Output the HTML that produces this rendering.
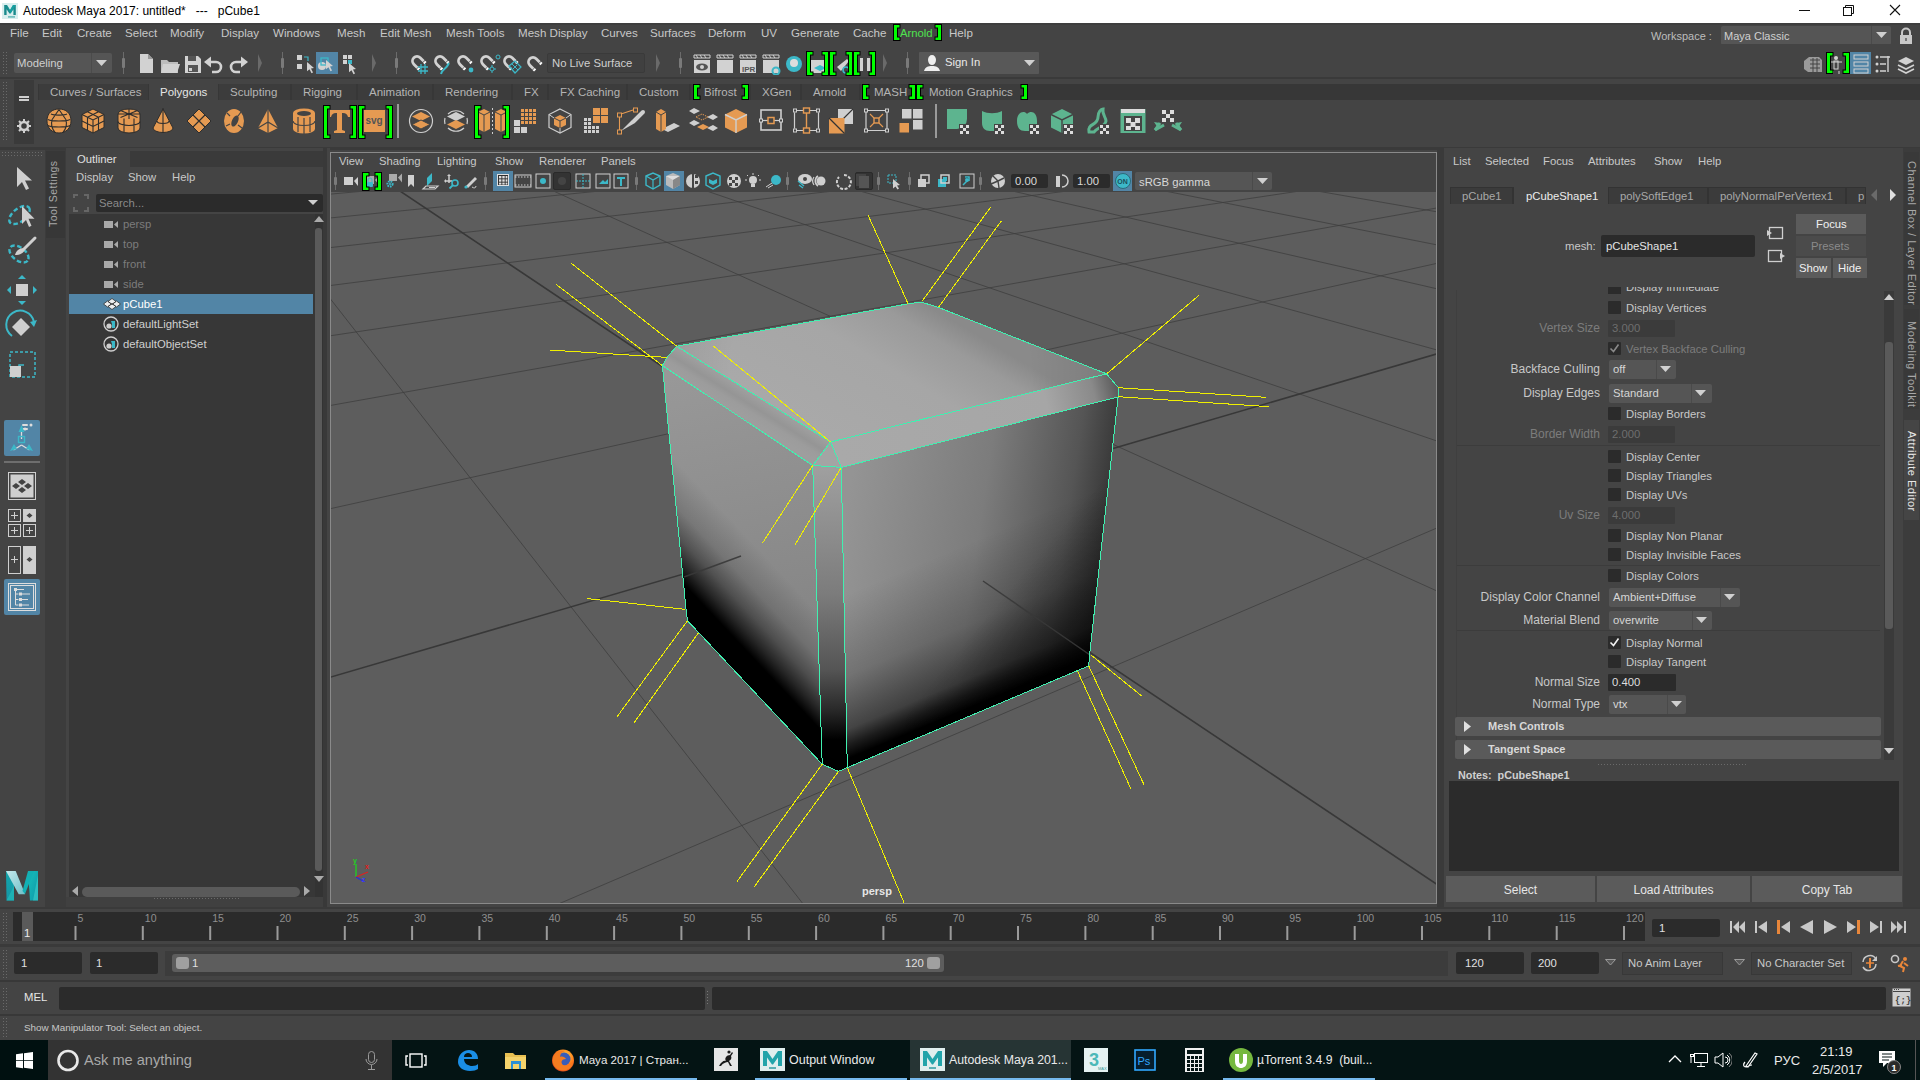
<!DOCTYPE html><html><head><meta charset="utf-8"><style>
*{margin:0;padding:0;box-sizing:border-box}
html,body{width:1920px;height:1080px;overflow:hidden;background:#444;font-family:"Liberation Sans",sans-serif;font-size:12px;color:#c4c4c4}
.a{position:absolute;display:block}
.t{position:absolute;white-space:nowrap;line-height:1}
</style></head><body>
<div class="a" style="left:0px;top:0px;width:1920px;height:23px;background:#ffffff;"></div>
<svg class="a" style="left:2px;top:3px" width="16" height="16" viewBox="0 0 16 16">
<rect x="0" y="0" width="16" height="16" fill="#d8eeee"/>
<path d="M2.2 12V2h2.8l3 5 3-5h2.8v10h-2.4V6.2L8.6 10.5H7.4L4.6 6.2V12z" fill="#1a8a8c"/>
<path d="M5 2L8 7l3-5h2.8L8.6 10.5z" fill="#14a8aa" opacity=".7"/>
<rect x="6" y="13.2" width="7" height="1.4" fill="#5ab4b4"/></svg>
<div class="t" style="left:23px;top:5px;font-size:12.01px;color:#000;">Autodesk Maya 2017: untitled*&nbsp;&nbsp;&nbsp;---&nbsp;&nbsp;&nbsp;pCube1</div>
<div class="a" style="left:1799px;top:10px;width:11px;height:1px;background:#111;"></div>
<svg class="a" style="left:1843px;top:5px" width="12" height="11" viewBox="0 0 12 11"><path d="M2.5 2.5V0.5h8v8h-2" fill="none" stroke="#111"/><rect x="0.5" y="2.5" width="8" height="8" fill="none" stroke="#111"/></svg>
<svg class="a" style="left:1889px;top:4px" width="12" height="12" viewBox="0 0 12 12"><path d="M1 1L11 11M11 1L1 11" stroke="#111" stroke-width="1.1"/></svg>
<div class="a" style="left:0px;top:23px;width:1920px;height:21px;background:#444;"></div>
<div class="a" style="left:0px;top:23px;width:1920px;height:2px;background:#3e3e3e;"></div>
<div class="t" style="left:10px;top:27px;font-size:11.6px;color:#c8c8c8;">File</div>
<div class="t" style="left:42px;top:27px;font-size:11.6px;color:#c8c8c8;">Edit</div>
<div class="t" style="left:77px;top:27px;font-size:11.6px;color:#c8c8c8;">Create</div>
<div class="t" style="left:125px;top:27px;font-size:11.6px;color:#c8c8c8;">Select</div>
<div class="t" style="left:170px;top:27px;font-size:11.6px;color:#c8c8c8;">Modify</div>
<div class="t" style="left:221px;top:27px;font-size:11.6px;color:#c8c8c8;">Display</div>
<div class="t" style="left:273px;top:27px;font-size:11.6px;color:#c8c8c8;">Windows</div>
<div class="t" style="left:337px;top:27px;font-size:11.6px;color:#c8c8c8;">Mesh</div>
<div class="t" style="left:380px;top:27px;font-size:11.6px;color:#c8c8c8;">Edit Mesh</div>
<div class="t" style="left:446px;top:27px;font-size:11.6px;color:#c8c8c8;">Mesh Tools</div>
<div class="t" style="left:518px;top:27px;font-size:11.6px;color:#c8c8c8;">Mesh Display</div>
<div class="t" style="left:601px;top:27px;font-size:11.6px;color:#c8c8c8;">Curves</div>
<div class="t" style="left:650px;top:27px;font-size:11.6px;color:#c8c8c8;">Surfaces</div>
<div class="t" style="left:708px;top:27px;font-size:11.6px;color:#c8c8c8;">Deform</div>
<div class="t" style="left:761px;top:27px;font-size:11.6px;color:#c8c8c8;">UV</div>
<div class="t" style="left:791px;top:27px;font-size:11.6px;color:#c8c8c8;">Generate</div>
<div class="t" style="left:853px;top:27px;font-size:11.6px;color:#c8c8c8;">Cache</div>
<div class="t" style="left:949px;top:27px;font-size:11.6px;color:#c8c8c8;">Help</div>
<svg class="a" style="left:893px;top:24px" width="8" height="17" viewBox="0 0 8 17"><path d="M7.5 0H0v17h7.5v-4.5H5V4.5h2.5z" fill="#000"/><path d="M6.5 1H1v15h5.5v-2.5H4V3.5h2.5z" fill="#00ff00"/></svg>
<div class="t" style="left:900px;top:28px;font-size:11.3px;color:#4fe34f;">Arnold</div>
<svg class="a" style="left:934px;top:24px" width="8" height="17" viewBox="0 0 8 17"><path d="M0.5 0H8v17H0.5v-4.5H3V4.5H0.5z" fill="#000"/><path d="M1.5 1H7v15H1.5v-2.5H4V3.5H1.5z" fill="#00ff00"/></svg>
<div class="t" style="left:1651px;top:31px;font-size:11px;color:#bdbdbd;">Workspace :</div>
<div class="a" style="left:1721px;top:26px;width:170px;height:19px;background:#555;border-radius:2px"></div>
<div class="a" style="left:1871px;top:26px;width:1px;height:19px;background:#4a4a4a;"></div>
<div class="t" style="left:1724px;top:31px;font-size:11px;color:#d0d0d0;">Maya Classic</div>
<svg class="a" style="left:1876px;top:32px" width="11" height="7"><path d="M0 0h11L5.5 6z" fill="#cfcfcf"/></svg>
<svg class="a" style="left:1899px;top:27px" width="14" height="18"><path d="M3 8V5.5a4 4 0 0 1 8 0V8" fill="none" stroke="#c8c8c8" stroke-width="2"/><rect x="1" y="8" width="12" height="9" fill="#c8c8c8"/><rect x="6.3" y="11" width="1.4" height="3" fill="#555"/></svg>
<div class="a" style="left:0px;top:44px;width:1920px;height:34px;background:#444;"></div>
<div class="a" style="left:0px;top:77px;width:1920px;height:2px;background:#3a3a3a;"></div>
<svg class="a" style="left:3px;top:52px" width="6" height="24"><rect x="0" y="0" width="1" height="1" fill="#6a6a6a"/><rect x="3" y="0" width="1" height="1" fill="#6a6a6a"/><rect x="0" y="3" width="1" height="1" fill="#6a6a6a"/><rect x="3" y="3" width="1" height="1" fill="#6a6a6a"/><rect x="0" y="6" width="1" height="1" fill="#6a6a6a"/><rect x="3" y="6" width="1" height="1" fill="#6a6a6a"/><rect x="0" y="9" width="1" height="1" fill="#6a6a6a"/><rect x="3" y="9" width="1" height="1" fill="#6a6a6a"/><rect x="0" y="12" width="1" height="1" fill="#6a6a6a"/><rect x="3" y="12" width="1" height="1" fill="#6a6a6a"/><rect x="0" y="15" width="1" height="1" fill="#6a6a6a"/><rect x="3" y="15" width="1" height="1" fill="#6a6a6a"/><rect x="0" y="18" width="1" height="1" fill="#6a6a6a"/><rect x="3" y="18" width="1" height="1" fill="#6a6a6a"/><rect x="0" y="21" width="1" height="1" fill="#6a6a6a"/><rect x="3" y="21" width="1" height="1" fill="#6a6a6a"/></svg>
<div class="a" style="left:14px;top:53px;width:98px;height:20px;background:#555;border-radius:2px"></div>
<div class="a" style="left:91px;top:53px;width:1px;height:20px;background:#4b4b4b;"></div>
<div class="t" style="left:17px;top:58px;font-size:11.3px;color:#cfcfcf;">Modeling</div>
<svg class="a" style="left:96px;top:60px" width="11" height="7"><path d="M0 0h11L5.5 6z" fill="#d0d0d0"/></svg>
<svg class="a" style="left:121px;top:52px" width="5" height="22"><rect x="2" y="0" width="1" height="22" fill="#6b6b6b"/><rect x="1" y="6" width="3" height="10" rx="1" fill="#7a7a7a"/></svg>
<svg class="a" style="left:138px;top:53px" width="120" height="22" viewBox="0 0 120 22">
<path d="M2 1h8l5 5v14H2z" fill="#d2d2d2"/><path d="M10 1v5h5" fill="#999"/>
<path d="M23 7h6l2 2h9v11H23z" fill="#bdbdbd"/><path d="M25 11h17l-3 9H23z" fill="#d2d2d2"/>
<path d="M47 3h13l3 3v14H47z" fill="#d2d2d2"/><rect x="50" y="3" width="8" height="5" fill="#555"/><rect x="50" y="12" width="10" height="7" fill="#555"/><rect x="51" y="15" width="3" height="3" fill="#d2d2d2"/>
<path d="M72 9h6a5 5 0 0 1 0 10h-4" fill="none" stroke="#d2d2d2" stroke-width="2.6"/><path d="M66 9l7-5.5v11z" fill="#d2d2d2"/>
<path d="M104 9h-6a5 5 0 0 0 0 10h4" fill="none" stroke="#d2d2d2" stroke-width="2.6"/><path d="M110 9l-7-5.5v11z" fill="#d2d2d2"/>
</svg>
<svg class="a" style="left:258px;top:54px" width="5" height="18"><path d="M0 0L4 9L0 18z" fill="#6a6a6a"/></svg>
<svg class="a" style="left:280px;top:52px" width="5" height="22"><rect x="2" y="0" width="1" height="22" fill="#6b6b6b"/><rect x="1" y="6" width="3" height="10" rx="1" fill="#7a7a7a"/></svg>
<div class="a" style="left:316px;top:52px;width:22px;height:22px;background:#5285a6;"></div>
<svg class="a" style="left:295px;top:53px" width="70" height="22" viewBox="0 0 70 22">
<rect x="2" y="2" width="5" height="5" fill="#d2d2d2"/><rect x="2" y="11" width="5" height="5" fill="#d2d2d2"/><path d="M9 4h4v4" fill="none" stroke="#3cb8c8" stroke-width="1.2"/>
<path d="M12 9l7 6-3 .5 2 4-1.5.8-2-4-2.5 2z" fill="#d2d2d2"/>
<circle cx="27" cy="13" r="4" fill="#d2d2d2"/><rect x="26" y="5" width="7" height="7" fill="none" stroke="#3cb8c8" stroke-width="1.3"/>
<path d="M31 7l7 6-3 .5 2 4-1.5.8-2-4-2.5 2z" fill="#d2d2d2"/>
<rect x="48" y="2" width="4" height="4" fill="#d2d2d2"/><rect x="53" y="2" width="4" height="4" fill="#d2d2d2"/><rect x="48" y="7" width="4" height="4" fill="#d2d2d2"/><rect x="53" y="7" width="4" height="4" fill="#3cb8c8"/>
<path d="M54 10l7 6-3 .5 2 4-1.5.8-2-4-2.5 2z" fill="#d2d2d2"/>
</svg>
<svg class="a" style="left:372px;top:54px" width="5" height="18"><path d="M0 0L4 9L0 18z" fill="#6a6a6a"/></svg>
<svg class="a" style="left:394px;top:52px" width="5" height="22"><rect x="2" y="0" width="1" height="22" fill="#6b6b6b"/><rect x="1" y="6" width="3" height="10" rx="1" fill="#7a7a7a"/></svg>
<svg class="a" style="left:408px;top:53px" width="140" height="22" viewBox="0 0 140 22">
<g transform="translate(9 8) rotate(-45)"><path d="M-4.5 5V0a4.5 4.5 0 0 1 9 0v5" fill="none" stroke="#d2d2d2" stroke-width="2.8"/><rect x="-6" y="5.5" width="3" height="2" fill="#fff"/><rect x="3" y="5.5" width="3" height="2" fill="#fff"/></g><path d="M10 14h10M10 18h10M13 11v10M17 11v10" stroke="#3cb8c8" stroke-width="1.3"/>
<g transform="translate(32 8) rotate(-45)"><path d="M-4.5 5V0a4.5 4.5 0 0 1 9 0v5" fill="none" stroke="#d2d2d2" stroke-width="2.8"/><rect x="-6" y="5.5" width="3" height="2" fill="#fff"/><rect x="3" y="5.5" width="3" height="2" fill="#fff"/></g><path d="M33 21c1-5 5-4 8-11" fill="none" stroke="#3cb8c8" stroke-width="2"/>
<g transform="translate(55 8) rotate(-45)"><path d="M-4.5 5V0a4.5 4.5 0 0 1 9 0v5" fill="none" stroke="#d2d2d2" stroke-width="2.8"/><rect x="-6" y="5.5" width="3" height="2" fill="#fff"/><rect x="3" y="5.5" width="3" height="2" fill="#fff"/></g><circle cx="63" cy="17" r="2.4" fill="#3cb8c8"/>
<g transform="translate(78 8) rotate(-45)"><path d="M-4.5 5V0a4.5 4.5 0 0 1 9 0v5" fill="none" stroke="#d2d2d2" stroke-width="2.8"/><rect x="-6" y="5.5" width="3" height="2" fill="#fff"/><rect x="3" y="5.5" width="3" height="2" fill="#fff"/></g><circle cx="84" cy="16" r="2" fill="none" stroke="#3cb8c8"/><circle cx="90" cy="4" r="2" fill="none" stroke="#3cb8c8"/><path d="M80 16h2M86 16h2M84 12v2M84 18v2" stroke="#3cb8c8"/>
<g transform="translate(101 8) rotate(-45)"><path d="M-4.5 5V0a4.5 4.5 0 0 1 9 0v5" fill="none" stroke="#d2d2d2" stroke-width="2.8"/><rect x="-6" y="5.5" width="3" height="2" fill="#fff"/><rect x="3" y="5.5" width="3" height="2" fill="#fff"/></g><path d="M101 13l6-5 6 6-6 6z" fill="none" stroke="#3cb8c8" stroke-width="1.2"/><path d="M104 11l6 6M105 16l4-4" stroke="#3cb8c8"/>
<g transform="translate(125 9) rotate(-45)"><path d="M-4.5 5V0a4.5 4.5 0 0 1 9 0v5" fill="none" stroke="#d2d2d2" stroke-width="2.8"/><rect x="-6" y="5.5" width="3" height="2" fill="#fff"/><rect x="3" y="5.5" width="3" height="2" fill="#fff"/></g>
</svg>
<div class="a" style="left:547px;top:53px;width:98px;height:20px;background:#404040;border:1px solid #3a3a3a;border-radius:2px"></div>
<div class="t" style="left:552px;top:58px;font-size:11.3px;color:#cfcfcf;">No Live Surface</div>
<svg class="a" style="left:656px;top:54px" width="5" height="18"><path d="M0 0L4 9L0 18z" fill="#6a6a6a"/></svg>
<svg class="a" style="left:678px;top:52px" width="5" height="22"><rect x="2" y="0" width="1" height="22" fill="#6b6b6b"/><rect x="1" y="6" width="3" height="10" rx="1" fill="#7a7a7a"/></svg>
<svg class="a" style="left:692px;top:53px" width="190" height="22" viewBox="0 0 190 22">
<rect x="2" y="7" width="16" height="13" fill="#d2d2d2"/><path d="M2 2h16v3H2z" fill="none" stroke="#d2d2d2" stroke-width="1"/><path d="M4 2l2 3M8 2l2 3M12 2l2 3" stroke="#d2d2d2"/><ellipse cx="10" cy="14" rx="6" ry="3.5" fill="#555"/><circle cx="10" cy="14" r="2" fill="#d2d2d2"/>
<rect x="25" y="7" width="16" height="13" fill="#d2d2d2"/><path d="M25 2h16v3H25z" fill="none" stroke="#d2d2d2" stroke-width="1"/><path d="M27 2l2 3M31 2l2 3M35 2l2 3" stroke="#d2d2d2"/>
<rect x="48" y="7" width="16" height="13" fill="#d2d2d2"/><path d="M48 2h16v3H48z" fill="none" stroke="#d2d2d2" stroke-width="1"/><path d="M50 2l2 3M54 2l2 3M58 2l2 3" stroke="#d2d2d2"/><text x="50" y="19" font-size="8" font-family="Liberation Sans" fill="#555" font-weight="bold">IPR</text>
<rect x="71" y="7" width="16" height="13" fill="#d2d2d2"/><path d="M71 2h16v3H71z" fill="none" stroke="#d2d2d2" stroke-width="1"/><path d="M73 2l2 3M77 2l2 3M81 2l2 3" stroke="#d2d2d2"/><circle cx="84" cy="18" r="3.5" fill="none" stroke="#3cb8c8" stroke-width="2"/>
<circle cx="102" cy="11" r="8" fill="#3cb8c8"/><circle cx="102" cy="10" r="4" fill="#ddd"/>
<rect x="118" y="7" width="16" height="13" fill="#d2d2d2"/><path d="M122 15l6-3 6 3-6 3z" fill="#3cb8c8"/>
<path d="M145 14l10-8 2 2-8 10z" fill="#d2d2d2"/><circle cx="154" cy="17" r="3" fill="none" stroke="#3cb8c8" stroke-width="1.6"/>
<rect x="168" y="5" width="3" height="13" fill="#d2d2d2"/><rect x="175" y="5" width="3" height="13" fill="#d2d2d2"/>
</svg>
<svg class="a" style="left:806px;top:51px" width="8" height="25" viewBox="0 0 8 25"><path d="M7.5 0H0v25h7.5v-4.5H5V4.5h2.5z" fill="#000"/><path d="M6.5 1H1v23h5.5v-2.5H4V3.5h2.5z" fill="#00ff00"/></svg>
<svg class="a" style="left:821px;top:51px" width="8" height="25" viewBox="0 0 8 25"><path d="M0.5 0H8v25H0.5v-4.5H3V4.5H0.5z" fill="#000"/><path d="M1.5 1H7v23H1.5v-2.5H4V3.5H1.5z" fill="#00ff00"/></svg>
<svg class="a" style="left:829px;top:51px" width="8" height="25" viewBox="0 0 8 25"><path d="M7.5 0H0v25h7.5v-4.5H5V4.5h2.5z" fill="#000"/><path d="M6.5 1H1v23h5.5v-2.5H4V3.5h2.5z" fill="#00ff00"/></svg>
<svg class="a" style="left:845px;top:51px" width="8" height="25" viewBox="0 0 8 25"><path d="M0.5 0H8v25H0.5v-4.5H3V4.5H0.5z" fill="#000"/><path d="M1.5 1H7v23H1.5v-2.5H4V3.5H1.5z" fill="#00ff00"/></svg>
<svg class="a" style="left:853px;top:51px" width="8" height="25" viewBox="0 0 8 25"><path d="M7.5 0H0v25h7.5v-4.5H5V4.5h2.5z" fill="#000"/><path d="M6.5 1H1v23h5.5v-2.5H4V3.5h2.5z" fill="#00ff00"/></svg>
<svg class="a" style="left:868px;top:51px" width="8" height="25" viewBox="0 0 8 25"><path d="M0.5 0H8v25H0.5v-4.5H3V4.5H0.5z" fill="#000"/><path d="M1.5 1H7v23H1.5v-2.5H4V3.5H1.5z" fill="#00ff00"/></svg>
<svg class="a" style="left:883px;top:54px" width="5" height="18"><path d="M0 0L4 9L0 18z" fill="#6a6a6a"/></svg>
<svg class="a" style="left:905px;top:52px" width="5" height="22"><rect x="2" y="0" width="1" height="22" fill="#6b6b6b"/><rect x="1" y="6" width="3" height="10" rx="1" fill="#7a7a7a"/></svg>
<div class="a" style="left:919px;top:52px;width:120px;height:22px;background:#585858;border-radius:1px"></div>
<svg class="a" style="left:924px;top:54px" width="16" height="18"><path d="M4 6a4 5 0 1 1 8 0c0 3-2 5-4 5S4 9 4 6z" fill="#eee"/><path d="M0 17c1-4 4-5 8-5s7 1 8 5z" fill="#eee"/></svg>
<div class="t" style="left:945px;top:57px;font-size:11.3px;color:#e8e8e8;">Sign In</div>
<svg class="a" style="left:1024px;top:60px" width="11" height="7"><path d="M0 0h11L5.5 6z" fill="#d0d0d0"/></svg>
<div class="a" style="left:1849px;top:52px;width:22px;height:22px;background:#5285a6;"></div>
<svg class="a" style="left:1802px;top:53px" width="118" height="22" viewBox="0 0 118 22">
<path d="M2 8l5-4h10l3 3v12H6l-4-3z" fill="#9a9a9a"/><path d="M8 7h10M8 11h10M8 15h10M11 5v14M15 5v14" stroke="#444" stroke-width="1"/>
<circle cx="34" cy="5" r="2" fill="#d2d2d2"/><rect x="32" y="8" width="4" height="8" fill="none" stroke="#d2d2d2"/><path d="M28 9h12M31 18v3M37 18v3" stroke="#d2d2d2"/>
<rect x="52" y="2" width="14" height="4" fill="none" stroke="#d2d2d2"/><rect x="52" y="9" width="14" height="4" fill="none" stroke="#d2d2d2"/><rect x="52" y="16" width="14" height="4" fill="none" stroke="#d2d2d2"/>
<circle cx="75" cy="4" r="1.5" fill="#d2d2d2"/><circle cx="75" cy="11" r="1.5" fill="#d2d2d2"/><circle cx="75" cy="18" r="1.5" fill="#d2d2d2"/><path d="M78 4h10M78 11h6M78 18h6M86 3v16" stroke="#d2d2d2" stroke-width="1.4"/>
<path d="M96 8l8-4 8 4-8 4z" fill="#d2d2d2"/><path d="M96 12l8 4 8-4M96 16l8 4 8-4" fill="none" stroke="#d2d2d2" stroke-width="1.6"/>
</svg>
<svg class="a" style="left:1826px;top:52px" width="8" height="22" viewBox="0 0 8 22"><path d="M7.5 0H0v22h7.5v-4.5H5V4.5h2.5z" fill="#000"/><path d="M6.5 1H1v20h5.5v-2.5H4V3.5h2.5z" fill="#00ff00"/></svg>
<svg class="a" style="left:1842px;top:52px" width="8" height="22" viewBox="0 0 8 22"><path d="M0.5 0H8v22H0.5v-4.5H3V4.5H0.5z" fill="#000"/><path d="M1.5 1H7v20H1.5v-2.5H4V3.5H1.5z" fill="#00ff00"/></svg>
<div class="a" style="left:0px;top:79px;width:1920px;height:67px;background:#444;"></div>
<svg class="a" style="left:3px;top:82px" width="6" height="60"><rect x="0" y="0" width="1" height="1" fill="#6a6a6a"/><rect x="3" y="0" width="1" height="1" fill="#6a6a6a"/><rect x="0" y="3" width="1" height="1" fill="#6a6a6a"/><rect x="3" y="3" width="1" height="1" fill="#6a6a6a"/><rect x="0" y="6" width="1" height="1" fill="#6a6a6a"/><rect x="3" y="6" width="1" height="1" fill="#6a6a6a"/><rect x="0" y="9" width="1" height="1" fill="#6a6a6a"/><rect x="3" y="9" width="1" height="1" fill="#6a6a6a"/><rect x="0" y="12" width="1" height="1" fill="#6a6a6a"/><rect x="3" y="12" width="1" height="1" fill="#6a6a6a"/><rect x="0" y="15" width="1" height="1" fill="#6a6a6a"/><rect x="3" y="15" width="1" height="1" fill="#6a6a6a"/><rect x="0" y="18" width="1" height="1" fill="#6a6a6a"/><rect x="3" y="18" width="1" height="1" fill="#6a6a6a"/><rect x="0" y="21" width="1" height="1" fill="#6a6a6a"/><rect x="3" y="21" width="1" height="1" fill="#6a6a6a"/><rect x="0" y="24" width="1" height="1" fill="#6a6a6a"/><rect x="3" y="24" width="1" height="1" fill="#6a6a6a"/><rect x="0" y="27" width="1" height="1" fill="#6a6a6a"/><rect x="3" y="27" width="1" height="1" fill="#6a6a6a"/><rect x="0" y="30" width="1" height="1" fill="#6a6a6a"/><rect x="3" y="30" width="1" height="1" fill="#6a6a6a"/><rect x="0" y="33" width="1" height="1" fill="#6a6a6a"/><rect x="3" y="33" width="1" height="1" fill="#6a6a6a"/><rect x="0" y="36" width="1" height="1" fill="#6a6a6a"/><rect x="3" y="36" width="1" height="1" fill="#6a6a6a"/><rect x="0" y="39" width="1" height="1" fill="#6a6a6a"/><rect x="3" y="39" width="1" height="1" fill="#6a6a6a"/><rect x="0" y="42" width="1" height="1" fill="#6a6a6a"/><rect x="3" y="42" width="1" height="1" fill="#6a6a6a"/><rect x="0" y="45" width="1" height="1" fill="#6a6a6a"/><rect x="3" y="45" width="1" height="1" fill="#6a6a6a"/><rect x="0" y="48" width="1" height="1" fill="#6a6a6a"/><rect x="3" y="48" width="1" height="1" fill="#6a6a6a"/><rect x="0" y="51" width="1" height="1" fill="#6a6a6a"/><rect x="3" y="51" width="1" height="1" fill="#6a6a6a"/><rect x="0" y="54" width="1" height="1" fill="#6a6a6a"/><rect x="3" y="54" width="1" height="1" fill="#6a6a6a"/><rect x="0" y="57" width="1" height="1" fill="#6a6a6a"/><rect x="3" y="57" width="1" height="1" fill="#6a6a6a"/></svg>
<div class="a" style="left:14px;top:80px;width:20px;height:64px;background:#3a3a3a;"></div>
<div class="a" style="left:19px;top:96px;width:10px;height:2px;background:#cfcfcf;"></div>
<div class="a" style="left:19px;top:99px;width:10px;height:2px;background:#cfcfcf;"></div>
<svg class="a" style="left:17px;top:119px" width="14" height="14"><circle cx="7" cy="7" r="4" fill="none" stroke="#cfcfcf" stroke-width="2.5"/><g stroke="#cfcfcf" stroke-width="2"><path d="M7 0v3M7 11v3M0 7h3M11 7h3M2 2l2 2M10 10l2 2M12 2l-2 2M2 12l2-2"/></g></svg>
<div class="a" style="left:38px;top:84px;width:1882px;height:16px;background:#373737;"></div>
<div class="a" style="left:39px;top:84px;width:109px;height:16px;background:#3c3c3c;"></div>
<div class="t" style="left:50px;top:87px;font-size:11.5px;color:#b4b4b4;">Curves / Surfaces</div>
<div class="a" style="left:149px;top:84px;width:69px;height:16px;background:#444;"></div>
<div class="t" style="left:160px;top:87px;font-size:11.5px;color:#e6e6e6;">Polygons</div>
<div class="a" style="left:219px;top:84px;width:71px;height:16px;background:#3c3c3c;"></div>
<div class="t" style="left:230px;top:87px;font-size:11.5px;color:#b4b4b4;">Sculpting</div>
<div class="a" style="left:292px;top:84px;width:64px;height:16px;background:#3c3c3c;"></div>
<div class="t" style="left:303px;top:87px;font-size:11.5px;color:#b4b4b4;">Rigging</div>
<div class="a" style="left:358px;top:84px;width:74px;height:16px;background:#3c3c3c;"></div>
<div class="t" style="left:369px;top:87px;font-size:11.5px;color:#b4b4b4;">Animation</div>
<div class="a" style="left:434px;top:84px;width:77px;height:16px;background:#3c3c3c;"></div>
<div class="t" style="left:445px;top:87px;font-size:11.5px;color:#b4b4b4;">Rendering</div>
<div class="a" style="left:513px;top:84px;width:34px;height:16px;background:#3c3c3c;"></div>
<div class="t" style="left:524px;top:87px;font-size:11.5px;color:#b4b4b4;">FX</div>
<div class="a" style="left:549px;top:84px;width:77px;height:16px;background:#3c3c3c;"></div>
<div class="t" style="left:560px;top:87px;font-size:11.5px;color:#b4b4b4;">FX Caching</div>
<div class="a" style="left:628px;top:84px;width:61px;height:16px;background:#3c3c3c;"></div>
<div class="t" style="left:639px;top:87px;font-size:11.5px;color:#b4b4b4;">Custom</div>
<div class="a" style="left:691px;top:84px;width:58px;height:16px;background:#3c3c3c;"></div>
<div class="t" style="left:704px;top:87px;font-size:11.5px;color:#b4b4b4;">Bifrost</div>
<div class="a" style="left:751px;top:84px;width:49px;height:16px;background:#3c3c3c;"></div>
<div class="t" style="left:762px;top:87px;font-size:11.5px;color:#b4b4b4;">XGen</div>
<div class="a" style="left:802px;top:84px;width:57px;height:16px;background:#3c3c3c;"></div>
<div class="t" style="left:813px;top:87px;font-size:11.5px;color:#b4b4b4;">Arnold</div>
<div class="a" style="left:861px;top:84px;width:53px;height:16px;background:#3c3c3c;"></div>
<div class="t" style="left:874px;top:87px;font-size:11.5px;color:#b4b4b4;">MASH</div>
<div class="a" style="left:916px;top:84px;width:109px;height:16px;background:#3c3c3c;"></div>
<div class="t" style="left:929px;top:87px;font-size:11.5px;color:#b4b4b4;">Motion Graphics</div>
<svg class="a" style="left:693px;top:84px" width="8" height="16" viewBox="0 0 8 16"><path d="M7.5 0H0v16h7.5v-4.5H5V4.5h2.5z" fill="#000"/><path d="M6.5 1H1v14h5.5v-2.5H4V3.5h2.5z" fill="#00ff00"/></svg>
<svg class="a" style="left:741px;top:84px" width="8" height="16" viewBox="0 0 8 16"><path d="M0.5 0H8v16H0.5v-4.5H3V4.5H0.5z" fill="#000"/><path d="M1.5 1H7v14H1.5v-2.5H4V3.5H1.5z" fill="#00ff00"/></svg>
<svg class="a" style="left:862px;top:84px" width="8" height="16" viewBox="0 0 8 16"><path d="M7.5 0H0v16h7.5v-4.5H5V4.5h2.5z" fill="#000"/><path d="M6.5 1H1v14h5.5v-2.5H4V3.5h2.5z" fill="#00ff00"/></svg>
<svg class="a" style="left:908px;top:84px" width="8" height="16" viewBox="0 0 8 16"><path d="M0.5 0H8v16H0.5v-4.5H3V4.5H0.5z" fill="#000"/><path d="M1.5 1H7v14H1.5v-2.5H4V3.5H1.5z" fill="#00ff00"/></svg>
<svg class="a" style="left:916px;top:84px" width="8" height="16" viewBox="0 0 8 16"><path d="M7.5 0H0v16h7.5v-4.5H5V4.5h2.5z" fill="#000"/><path d="M6.5 1H1v14h5.5v-2.5H4V3.5h2.5z" fill="#00ff00"/></svg>
<svg class="a" style="left:1020px;top:84px" width="8" height="16" viewBox="0 0 8 16"><path d="M0.5 0H8v16H0.5v-4.5H3V4.5H0.5z" fill="#000"/><path d="M1.5 1H7v14H1.5v-2.5H4V3.5H1.5z" fill="#00ff00"/></svg>
<svg class="a" style="left:40px;top:104px" width="1160" height="34" viewBox="40 104 1160 34">
<g transform="translate(47,108)">
<path d="M12 1C19 1 24 5 24 13c0 7-5 12-12 12S0 20 0 13C0 5 5 1 12 1z" fill="#e59a52" stroke="#2d2d2d" stroke-width="1"/>
<path d="M4 6c3 1.5 13 1.5 16 0M1 11.5c4 2 18 2 22 0M1 17.5c4 2 18 2 22 0M12 1.5L5 11.8M12 1.5l7 10.3M5 11.8c-1 4 0 9 3 12.5M19 11.8c1 4 0 9-3 12.5" fill="none" stroke="#2d2d2d" stroke-width="1.1"/>
</g>
<g transform="translate(81,108)">
<path d="M12 1l11 5.5v13L12 25 1 19.5v-13z" fill="#e59a52" stroke="#2d2d2d" stroke-width="1"/>
<path d="M1 6.5l11 5.5 11-5.5M12 12v13M6.5 3.8l11 5.5M17.5 3.8L6.5 9.3M1 13l11 5.5 11-5.5M6.5 9.3v13M17.5 9.3v13" fill="none" stroke="#2d2d2d" stroke-width="1.1"/>
</g>
<g transform="translate(118,108)">
<path d="M0 6a11 5 0 0 1 22 0v14a11 5 0 0 1-22 0z" fill="#e59a52" stroke="#2d2d2d" stroke-width="1"/>
<path d="M0 6h22M2.5 2.5l17 7M19.5 2.5l-17 7M11 1v10M0 13.5a11 4 0 0 0 22 0M6 10.5v14M16 10.5v14" fill="none" stroke="#2d2d2d" stroke-width="1.1"/>
</g>
<g transform="translate(153,108)">
<path d="M10 1L20 20a10 4.5 0 0 1-20 0z" fill="#e59a52" stroke="#2d2d2d" stroke-width="1"/>
<path d="M10 0v25M4 13a6 2.5 0 0 0 12 0" fill="none" stroke="#2d2d2d" stroke-width="1.1"/>
</g>
<g transform="translate(187,108)">
<path d="M12 1l12 12-12 12L0 13z" fill="#e59a52" stroke="#2d2d2d" stroke-width="1"/>
<path d="M6 7l12 12M18 7L6 19" stroke="#2d2d2d" stroke-width="1.2"/>
</g>
<g transform="translate(224,108)">
<ellipse cx="10" cy="13" rx="10" ry="12" fill="#e59a52"/>
<ellipse cx="11" cy="13" rx="3" ry="6" transform="rotate(25 11 13)" fill="#444"/>
<path d="M3 5l3 3M17 4l-3 4M2 18l4-2M18 20l-4-3" stroke="#444" stroke-width="1.2"/>
</g>
<g transform="translate(258,108)">
<path d="M10 1l10 19-10 5-10-5z" fill="#e59a52"/>
<path d="M10 1v24M0 20l10-6 10 6" fill="none" stroke="#444" stroke-width="1.2"/>
</g>
<g transform="translate(293,108)">
<path d="M0 5a11 4.5 0 0 1 22 0v16a11 4.5 0 0 1-22 0z" fill="#e59a52"/>
<ellipse cx="11" cy="5.5" rx="7" ry="2.6" fill="#444"/>
<path d="M0 13a11 4.5 0 0 0 22 0M5 9v15M11 10v16M17 9v15" fill="none" stroke="#444" stroke-width="1.2"/>
</g>
<g transform="translate(329,108)">
<path d="M1 2h20v7h-2c-1-3-2-4-5-4h-1v17l3 1v2H5v-2l3-1V5H7C4 5 3 6 2 9H1z" fill="#e59a52"/>
</g>
<g transform="translate(364,110)">
<rect x="0" y="0" width="21" height="22" fill="#e59a52"/>
<text x="1.5" y="14" font-size="10" font-weight="bold" font-family="Liberation Sans" fill="#555">svg</text>
</g>
<rect x="397" y="104" width="2" height="35" fill="#9a9a9a"/>
<g transform="translate(409,108)">
<circle cx="12" cy="13" r="11.5" fill="none" stroke="#cfcfcf" stroke-width="1.2"/>
<path d="M12 4l9 4.5-9 4.5-9-4.5z" fill="#e59a52"/><path d="M12 12l9 4.5-9 4.5-9-4.5z" fill="#e59a52" stroke="#444" stroke-width="1"/>
</g>
<g transform="translate(444,108)">
<path d="M4 6a11.5 11.5 0 0 1 16 0M20 20a11.5 11.5 0 0 1-16 0M1 10a11.5 11.5 0 0 0 0 6M23 10a11.5 11.5 0 0 1 0 6" fill="none" stroke="#cfcfcf" stroke-width="1.2"/>
<path d="M12 4l9 4.5-9 4.5-9-4.5z" fill="#cfcfcf"/><path d="M12 12l9 4.5-9 4.5-9-4.5z" fill="#e59a52"/>
</g>
<g transform="translate(477,108)">
<path d="M1 4l6-3 6 3v17l-6 3-6-3z" fill="#e59a52"/><path d="M1 4l6 3 6-3M7 7v17" fill="none" stroke="#444"/>
<path d="M18 4l6-3 6 3v17l-6 3-6-3z" fill="#e59a52"/><path d="M18 4l6 3 6-3M24 7v17" fill="none" stroke="#444"/>
<path d="M15.5 0v26" stroke="#cfcfcf" stroke-dasharray="2 2"/>
</g>
<g transform="translate(513,108)">
<rect x="8" y="1" width="3" height="3" fill="#e59a52"/><rect x="12" y="1" width="3" height="3" fill="#e59a52"/><rect x="16" y="1" width="3" height="3" fill="#e59a52"/><rect x="20" y="1" width="3" height="3" fill="#e59a52"/><rect x="8" y="5" width="3" height="3" fill="#e59a52"/><rect x="12" y="5" width="3" height="3" fill="#e59a52"/><rect x="16" y="5" width="3" height="3" fill="#e59a52"/><rect x="20" y="5" width="3" height="3" fill="#e59a52"/><rect x="8" y="9" width="3" height="3" fill="#e59a52"/><rect x="12" y="9" width="3" height="3" fill="#e59a52"/><rect x="16" y="9" width="3" height="3" fill="#e59a52"/><rect x="20" y="9" width="3" height="3" fill="#e59a52"/><rect x="8" y="13" width="3" height="3" fill="#e59a52"/><rect x="12" y="13" width="3" height="3" fill="#e59a52"/><rect x="16" y="13" width="3" height="3" fill="#e59a52"/><rect x="20" y="13" width="3" height="3" fill="#e59a52"/>
<rect x="1" y="12" width="6" height="6" fill="#cfcfcf"/><rect x="8" y="19" width="6" height="6" fill="#cfcfcf"/><rect x="1" y="19" width="6" height="6" fill="#cfcfcf"/>
</g>
<g transform="translate(548,108)">
<path d="M12 1l11 5.5v13L12 25 1 19.5v-13z" fill="none" stroke="#cfcfcf" stroke-width="1.2"/>
<path d="M12 7l6 3v7l-6 3-6-3v-7z" fill="#e59a52"/><path d="M6 10l6 3 6-3M12 13v7" stroke="#444" fill="none"/>
<path d="M1 6.5l5 3.5M23 6.5l-5 3.5M12 25v-5" stroke="#cfcfcf"/>
</g>
<g transform="translate(583,108)">
<rect x="10" y="0" width="7" height="7" fill="#e59a52"/><rect x="18" y="0" width="7" height="7" fill="#e59a52"/><rect x="10" y="8" width="7" height="7" fill="#e59a52"/><rect x="18" y="8" width="7" height="7" fill="#e59a52"/>
<rect x="1" y="10" width="3" height="3" fill="#cfcfcf"/><rect x="5" y="10" width="3" height="3" fill="#cfcfcf"/><rect x="1" y="14" width="3" height="3" fill="#cfcfcf"/><rect x="5" y="14" width="3" height="3" fill="#cfcfcf"/><rect x="1" y="18" width="3" height="3" fill="#cfcfcf"/><rect x="5" y="18" width="3" height="3" fill="#cfcfcf"/><rect x="9" y="18" width="3" height="3" fill="#cfcfcf"/><rect x="13" y="18" width="3" height="3" fill="#cfcfcf"/><rect x="1" y="22" width="3" height="3" fill="#cfcfcf"/><rect x="5" y="22" width="3" height="3" fill="#cfcfcf"/><rect x="9" y="22" width="3" height="3" fill="#cfcfcf"/><rect x="13" y="22" width="3" height="3" fill="#cfcfcf"/>
</g>
<g transform="translate(617,108)">
<path d="M2.5 9v13M4 6l12-4" stroke="#e59a52" stroke-width="1.1" fill="none"/>
<rect x="0.5" y="5" width="4" height="4" fill="#444" stroke="#e59a52"/><rect x="16.5" y="0" width="4" height="4" fill="#444" stroke="#e59a52"/><rect x="0.5" y="22" width="4" height="4" fill="#444" stroke="#e59a52"/>
<path d="M4 23l11-11 3 3z" fill="#cfcfcf"/><path d="M17 13l9-9" stroke="#cfcfcf" stroke-width="4" stroke-linecap="round"/>
</g>
<g transform="translate(655,108)">
<path d="M10 25l12-6 6 3-12 6z" fill="#cfcfcf" transform="translate(-3,-4)"/>
<path d="M1 4l5-3 5 3v17l-5 3-5-3z" fill="#e59a52"/><path d="M1 4l5 3 5-3M6 7v17" stroke="#444" fill="none"/>
</g>
<g transform="translate(686,108)">
<path d="M3 3l5-3 6 3-6 3zM21 9l6-3 5 3-5 3zM3 15l5-3 6 3-6 3zM21 20l6-3 5 3-5 3z" fill="#cfcfcf"/>
<path d="M10 9l6-3 6 3-6 3z" fill="none" stroke="#e59a52" stroke-dasharray="1.5 1"/>
<path d="M11 19l6-3 6 3-6 3z" fill="#e59a52"/>
</g>
<g transform="translate(724,108)">
<path d="M12 1l11 5.5v13L12 25 1 19.5v-13z" fill="#e59a52"/>
<path d="M1 6.5l11 5.5 11-5.5M12 12v13" stroke="#cfcfcf" stroke-width="1.4" fill="none"/>
</g>
<g transform="translate(759,108)">
<rect x="2" y="2" width="20" height="20" fill="none" stroke="#cfcfcf" stroke-width="1.6"/>
<path d="M2 12.5h20" stroke="#cfcfcf" stroke-width="1.2"/>
<rect x="0.5" y="11" width="3" height="3" fill="#444" stroke="#cfcfcf"/><rect x="20.5" y="11" width="3" height="3" fill="#444" stroke="#cfcfcf"/>
<rect x="9" y="9.5" width="6" height="6" fill="#444" stroke="#e59a52" stroke-width="1.5"/>
</g>
<g transform="translate(793,108)">
<path d="M3.5 2.5h20M3.5 22.5h20M1.5 4.5v16M25.5 4.5v16" stroke="#cfcfcf" stroke-width="1.2" fill="none"/>
<rect x="0.5" y="1" width="3" height="3" fill="#444" stroke="#cfcfcf"/><rect x="23.5" y="1" width="3" height="3" fill="#444" stroke="#cfcfcf"/><rect x="0.5" y="21" width="3" height="3" fill="#444" stroke="#cfcfcf"/><rect x="23.5" y="21" width="3" height="3" fill="#444" stroke="#cfcfcf"/>
<path d="M13.5 5v15" stroke="#e59a52" stroke-width="1.4"/>
<rect x="10.5" y="0" width="6" height="5" fill="#444" stroke="#e59a52" stroke-width="1.4"/><rect x="10.5" y="20" width="6" height="5" fill="#444" stroke="#e59a52" stroke-width="1.4"/>
</g>
<g transform="translate(828,108)">
<rect x="10" y="1" width="15" height="15" fill="#cfcfcf"/><path d="M25 1L10 16" stroke="#333" stroke-width="1.1"/>
<rect x="1" y="10" width="15.5" height="15.5" fill="#e59a52"/><path d="M1 10l15.5 15.5" stroke="#333" stroke-width="1.2"/>
</g>
<g transform="translate(864,108)">
<path d="M3.5 2.5h18M3.5 22.5h18M2 4v17M23 4v17" stroke="#cfcfcf" stroke-width="1.2" fill="none"/>
<rect x="0.5" y="1" width="3" height="3" fill="#444" stroke="#cfcfcf"/><rect x="21.5" y="1" width="3" height="3" fill="#444" stroke="#cfcfcf"/><rect x="0.5" y="21" width="3" height="3" fill="#444" stroke="#cfcfcf"/><rect x="21.5" y="21" width="3" height="3" fill="#444" stroke="#cfcfcf"/>
<path d="M6 6l4 4M19 6l-4 4M6 19l4-4M19 19l-4-4" stroke="#e59a52" stroke-width="1.1"/>
<rect x="10" y="10" width="5" height="5" fill="#444" stroke="#e59a52" stroke-width="1.4"/>
</g>
<g transform="translate(898,108)">
<rect x="4" y="1" width="9.5" height="9.5" fill="#cfcfcf"/><rect x="15" y="1" width="9.5" height="9.5" fill="#cfcfcf"/><rect x="15" y="12" width="9.5" height="9.5" fill="#cfcfcf"/>
<rect x="1.5" y="15" width="9.5" height="9.5" fill="#e59a52"/>
</g>
<rect x="935" y="104" width="2" height="35" fill="#9a9a9a"/>
<g transform="translate(946,108)">
<path d="M1 1h20v10a10 10 0 0 1-10 10H1z" fill="#5db48f"/>
</g>
<g transform="translate(981,108)">
<path d="M1 3c6 3 14 3 20 0v20H9C4 23 1 20 1 15z" fill="#5db48f"/>
</g>
<g transform="translate(1016,108)">
<path d="M1 13C1 4 8 2 11 6c4-4 10-2 10 7v10H9C4 23 1 20 1 13z" fill="#5db48f"/>
</g>
<g transform="translate(1050,108)">
<path d="M12 1l11 5.5v13L12 25 1 19.5v-13z" fill="#5db48f"/><path d="M1 6.5l11 5.5 11-5.5M12 12v13" stroke="#444" stroke-width="1.4" fill="none"/>
</g>
<g transform="translate(1086,108)">
<path d="M3 24C1 15 12 18 12 9c0-5 3-8 5-8-1 6 3 8 3 12-1 6-8 6-12 11z" fill="none" stroke="#5db48f" stroke-width="3"/>
</g>
<g transform="translate(1120,108)">
<rect x="0.5" y="1" width="25" height="24" fill="#5db48f"/><rect x="1" y="1" width="24" height="4" fill="#ddd"/><rect x="4" y="8" width="18" height="15" fill="#444"/>
<rect x="6" y="10" width="5" height="5" fill="#ddd"/><rect x="15" y="10" width="5" height="5" fill="#ddd"/><rect x="10.5" y="14" width="5" height="5" fill="#ddd"/><rect x="6" y="18" width="5" height="4" fill="#ddd"/><rect x="15" y="18" width="5" height="4" fill="#ddd"/>
</g>
<g transform="translate(1154,108)">
<path d="M1 22l9-5M27 22l-9-5" stroke="#5db48f" stroke-width="3"/><path d="M0 14l6 1-2 5zM28 14l-6 1 2 5z" fill="#5db48f"/>
<path d="M1 22l5-7M27 22l-5-7" stroke="#5db48f" stroke-width="3"/>
</g>
</svg>
<svg class="a" style="left:1197px;top:104px" width="1" height="1"></svg>
<svg class="a" style="left:959px;top:124px" width="12" height="12"><rect width="12" height="12" fill="#444"/><rect x="1" y="1" width="3" height="3" fill="#ddd"/><rect x="7" y="1" width="3" height="3" fill="#ddd"/><rect x="4" y="4" width="3" height="3" fill="#ddd"/><rect x="1" y="7" width="3" height="3" fill="#ddd"/><rect x="7" y="7" width="3" height="3" fill="#ddd"/></svg>
<svg class="a" style="left:994px;top:124px" width="12" height="12"><rect width="12" height="12" fill="#444"/><rect x="1" y="1" width="3" height="3" fill="#ddd"/><rect x="7" y="1" width="3" height="3" fill="#ddd"/><rect x="4" y="4" width="3" height="3" fill="#ddd"/><rect x="1" y="7" width="3" height="3" fill="#ddd"/><rect x="7" y="7" width="3" height="3" fill="#ddd"/></svg>
<svg class="a" style="left:1029px;top:124px" width="12" height="12"><rect width="12" height="12" fill="#444"/><rect x="1" y="1" width="3" height="3" fill="#ddd"/><rect x="7" y="1" width="3" height="3" fill="#ddd"/><rect x="4" y="4" width="3" height="3" fill="#ddd"/><rect x="1" y="7" width="3" height="3" fill="#ddd"/><rect x="7" y="7" width="3" height="3" fill="#ddd"/></svg>
<svg class="a" style="left:1063px;top:124px" width="12" height="12"><rect width="12" height="12" fill="#444"/><rect x="1" y="1" width="3" height="3" fill="#ddd"/><rect x="7" y="1" width="3" height="3" fill="#ddd"/><rect x="4" y="4" width="3" height="3" fill="#ddd"/><rect x="1" y="7" width="3" height="3" fill="#ddd"/><rect x="7" y="7" width="3" height="3" fill="#ddd"/></svg>
<svg class="a" style="left:1099px;top:124px" width="12" height="12"><rect width="12" height="12" fill="#444"/><rect x="1" y="1" width="3" height="3" fill="#ddd"/><rect x="7" y="1" width="3" height="3" fill="#ddd"/><rect x="4" y="4" width="3" height="3" fill="#ddd"/><rect x="1" y="7" width="3" height="3" fill="#ddd"/><rect x="7" y="7" width="3" height="3" fill="#ddd"/></svg>
<svg class="a" style="left:1160px;top:108px" width="16" height="16"><rect x="2" y="2" width="4" height="4" fill="#ddd"/><rect x="10" y="2" width="4" height="4" fill="#ddd"/><rect x="6" y="6" width="4" height="4" fill="#ddd"/><rect x="2" y="10" width="4" height="4" fill="#ddd"/><rect x="10" y="10" width="4" height="4" fill="#ddd"/></svg>
<svg class="a" style="left:323px;top:105px" width="8" height="34" viewBox="0 0 8 34"><path d="M7.5 0H0v34h7.5v-4.5H5V4.5h2.5z" fill="#000"/><path d="M6.5 1H1v32h5.5v-2.5H4V3.5h2.5z" fill="#00ff00"/></svg>
<svg class="a" style="left:349px;top:105px" width="8" height="34" viewBox="0 0 8 34"><path d="M0.5 0H8v34H0.5v-4.5H3V4.5H0.5z" fill="#000"/><path d="M1.5 1H7v32H1.5v-2.5H4V3.5H1.5z" fill="#00ff00"/></svg>
<svg class="a" style="left:358px;top:105px" width="8" height="34" viewBox="0 0 8 34"><path d="M7.5 0H0v34h7.5v-4.5H5V4.5h2.5z" fill="#000"/><path d="M6.5 1H1v32h5.5v-2.5H4V3.5h2.5z" fill="#00ff00"/></svg>
<svg class="a" style="left:385px;top:105px" width="8" height="34" viewBox="0 0 8 34"><path d="M0.5 0H8v34H0.5v-4.5H3V4.5H0.5z" fill="#000"/><path d="M1.5 1H7v32H1.5v-2.5H4V3.5H1.5z" fill="#00ff00"/></svg>
<svg class="a" style="left:474px;top:105px" width="8" height="34" viewBox="0 0 8 34"><path d="M7.5 0H0v34h7.5v-4.5H5V4.5h2.5z" fill="#000"/><path d="M6.5 1H1v32h5.5v-2.5H4V3.5h2.5z" fill="#00ff00"/></svg>
<svg class="a" style="left:502px;top:105px" width="8" height="34" viewBox="0 0 8 34"><path d="M0.5 0H8v34H0.5v-4.5H3V4.5H0.5z" fill="#000"/><path d="M1.5 1H7v32H1.5v-2.5H4V3.5H1.5z" fill="#00ff00"/></svg>
<div class="a" style="left:0px;top:146px;width:1920px;height:762px;background:#444;"></div>
<div class="a" style="left:0px;top:147px;width:1920px;height:3px;background:#3a3a3a;"></div>
<svg class="a" style="left:2px;top:152px" width="40" height="4"><rect x="0" y="0" width="1" height="1" fill="#6a6a6a"/><rect x="0" y="3" width="1" height="1" fill="#6a6a6a"/><rect x="3" y="0" width="1" height="1" fill="#6a6a6a"/><rect x="3" y="3" width="1" height="1" fill="#6a6a6a"/><rect x="6" y="0" width="1" height="1" fill="#6a6a6a"/><rect x="6" y="3" width="1" height="1" fill="#6a6a6a"/><rect x="9" y="0" width="1" height="1" fill="#6a6a6a"/><rect x="9" y="3" width="1" height="1" fill="#6a6a6a"/><rect x="12" y="0" width="1" height="1" fill="#6a6a6a"/><rect x="12" y="3" width="1" height="1" fill="#6a6a6a"/><rect x="15" y="0" width="1" height="1" fill="#6a6a6a"/><rect x="15" y="3" width="1" height="1" fill="#6a6a6a"/><rect x="18" y="0" width="1" height="1" fill="#6a6a6a"/><rect x="18" y="3" width="1" height="1" fill="#6a6a6a"/><rect x="21" y="0" width="1" height="1" fill="#6a6a6a"/><rect x="21" y="3" width="1" height="1" fill="#6a6a6a"/><rect x="24" y="0" width="1" height="1" fill="#6a6a6a"/><rect x="24" y="3" width="1" height="1" fill="#6a6a6a"/><rect x="27" y="0" width="1" height="1" fill="#6a6a6a"/><rect x="27" y="3" width="1" height="1" fill="#6a6a6a"/><rect x="30" y="0" width="1" height="1" fill="#6a6a6a"/><rect x="30" y="3" width="1" height="1" fill="#6a6a6a"/><rect x="33" y="0" width="1" height="1" fill="#6a6a6a"/><rect x="33" y="3" width="1" height="1" fill="#6a6a6a"/><rect x="36" y="0" width="1" height="1" fill="#6a6a6a"/><rect x="36" y="3" width="1" height="1" fill="#6a6a6a"/><rect x="39" y="0" width="1" height="1" fill="#6a6a6a"/><rect x="39" y="3" width="1" height="1" fill="#6a6a6a"/></svg>
<svg class="a" style="left:0px;top:160px" width="44" height="220" viewBox="0 0 44 220">
<path d="M17 7v20l5-5 4 8 3-1.5-4-8h7z" fill="#cfcfcf"/>
<ellipse cx="19.5" cy="55" rx="12" ry="6.5" transform="rotate(-38 19.5 55)" fill="none" stroke="#3cb8c8" stroke-width="2.4" stroke-dasharray="4.5 2.5"/>
<path d="M22 46v18l4-4 3 7 2.5-1.2-3-7h6z" fill="#cfcfcf"/>
<ellipse cx="19" cy="94" rx="11" ry="6.5" transform="rotate(38 19 94)" fill="none" stroke="#3cb8c8" stroke-width="2.4" stroke-dasharray="4.5 2.5"/>
<path d="M35 78l-11 11" stroke="#cfcfcf" stroke-width="3" stroke-linecap="round"/><path d="M24 88c-5 0-8 3-9 7 5 0 9-2 10-6z" fill="#cfcfcf"/>
<rect x="16" y="124" width="12" height="12" fill="#cfcfcf"/>
<path d="M22 115l4 4h-8zM22 145l4-4h-8zM7 130l4-4v8zM37 130l-4-4v8z" fill="#3cb8c8"/>
<path d="M12 176a14 14 0 1 1 22-14" fill="none" stroke="#3cb8c8" stroke-width="2"/><path d="M37 160l-3 7-4-5z" fill="#3cb8c8"/>
<path d="M21 158l9 9-9 9-9-9z" fill="#cfcfcf"/>
<rect x="10" y="192" width="25" height="25" fill="none" stroke="#3cb8c8" stroke-width="1.5" stroke-dasharray="3 2"/>
<path d="M19 209v-4h5" fill="none" stroke="#3cb8c8" stroke-width="1.5"/>
<rect x="10" y="206" width="11" height="11" fill="#cfcfcf"/>
</svg>
<div class="a" style="left:4px;top:420px;width:36px;height:36px;background:#5285a6;border-radius:2px"></div>
<svg class="a" style="left:4px;top:420px" width="36" height="36" viewBox="0 0 36 36">
<rect x="18" y="4" width="6" height="2" rx="1" fill="#ddd"/><rect x="18" y="8" width="6" height="2" rx="1" fill="#ddd"/>
<circle cx="27" cy="5" r="1.5" fill="#ddd"/><circle cx="21" cy="9" r="1.5" fill="#ddd"/>
<path d="M17.5 12v7M17.5 25l-8 5M17.5 25l8 5" stroke="#ddd" stroke-width="1.3"/>
<path d="M17.5 5l3 7h-6z" fill="#3cb8c8"/><rect x="14.5" y="16.5" width="6" height="6" fill="none" stroke="#3cb8c8" stroke-width="1.4"/>
<path d="M6 31l4-7 3 5z M29 31l-4-7-3 5z" fill="#3cb8c8"/>
</svg>
<div class="a" style="left:4px;top:461px;width:36px;height:2px;background:#6e6e6e;"></div>
<svg class="a" style="left:4px;top:470px" width="36" height="110" viewBox="0 0 36 110">
<rect x="4.5" y="2.5" width="27" height="27" fill="none" stroke="#cfcfcf"/><rect x="6.5" y="4.5" width="23" height="23" fill="#cfcfcf"/>
<path d="M18 9l4 3-4 3-4-3zM18 17l4 3-4 3-4-3zM12 13l4 3-4 3-4-3zM24 13l4 3-4 3-4-3z" fill="#444"/>
<rect x="4.5" y="39.5" width="12" height="12" fill="none" stroke="#cfcfcf"/><path d="M10.5 42v7M7 45.5h7" stroke="#cfcfcf"/>
<rect x="19" y="39" width="13" height="13" fill="#cfcfcf"/><path d="M25.5 43l3 2.5-3 2.5-3-2.5z" fill="#444"/>
<rect x="4.5" y="54.5" width="12" height="12" fill="none" stroke="#cfcfcf"/><path d="M10.5 57v7M7 60.5h7" stroke="#cfcfcf"/>
<rect x="19.5" y="54.5" width="12" height="12" fill="none" stroke="#cfcfcf"/><path d="M25.5 57v7M22 60.5h7" stroke="#cfcfcf"/>
<rect x="4.5" y="76.5" width="12" height="27" fill="none" stroke="#cfcfcf"/><path d="M10.5 86v7M7 89.5h7" stroke="#cfcfcf"/>
<rect x="19" y="76" width="13" height="28" fill="#cfcfcf"/><path d="M25.5 87l3 2.5-3 2.5-3-2.5z" fill="#444"/>
</svg>
<div class="a" style="left:4px;top:579px;width:36px;height:36px;background:#5285a6;border-radius:2px"></div>
<svg class="a" style="left:4px;top:579px" width="36" height="36" viewBox="0 0 36 36">
<rect x="4.5" y="4.5" width="27" height="27" fill="none" stroke="#ddd"/><rect x="6.5" y="6.5" width="23" height="23" fill="none" stroke="#ddd"/>
<rect x="10" y="9" width="3" height="3" fill="#ddd"/><path d="M13 10.5h7M11.5 12v14M11.5 15h3M11.5 20.5h3M11.5 26h3" stroke="#ddd"/>
<rect x="15" y="13.5" width="3" height="3" fill="#ddd"/><rect x="15" y="19" width="3" height="3" fill="#ddd"/><rect x="15" y="24.5" width="3" height="3" fill="#ddd"/>
<path d="M18 15h8M18 20.5h6M18 26h7" stroke="#ddd"/>
</svg>
<svg class="a" style="left:0px;top:860px" width="44" height="46" viewBox="0 0 44 46">
<defs><linearGradient id="mgl" x1="0" y1="0" x2="0" y2="1"><stop offset="0" stop-color="#12a6ac"/><stop offset="1" stop-color="#1596a6"/></linearGradient>
<linearGradient id="mgd" x1="0" y1="0" x2="1" y2="1"><stop offset="0" stop-color="#c4e8ec"/><stop offset="1" stop-color="#6ec0c8"/></linearGradient>
<linearGradient id="mgr" x1="0" y1="0" x2="1" y2="1"><stop offset="0" stop-color="#18c0bc"/><stop offset="1" stop-color="#0e98a8"/></linearGradient></defs>
<path d="M6 11h8v29.5H6.5z" fill="url(#mgl)"/>
<path d="M6.5 40.5L14 26v14.5z" fill="#1fb8b8" opacity=".8"/>
<path d="M6 11h9.7l9.5 23.3h-6.5z" fill="url(#mgd)"/>
<path d="M28 11h10v29.5h-8z" fill="url(#mgr)"/>
<path d="M28 11h6L25 34l-2.5-3z" fill="#12b0b4"/>
<path d="M38 15v25.5h-5z" fill="#3fd0cc" opacity=".6"/>
</svg>
<div class="a" style="left:45px;top:150px;width:21px;height:757px;background:#3c3c3c;"></div>
<div class="a" style="left:46px;top:151px;width:19px;height:87px;background:#373737;"></div>
<div class="t" style="left:48px;top:227px;font-size:10.5px;color:#a8a8a8;transform:rotate(-90deg);transform-origin:0 0;letter-spacing:0.5px">Tool Settings</div>
<div class="a" style="left:66px;top:148px;width:264px;height:759px;background:#444;"></div>
<div class="a" style="left:68px;top:151px;width:62px;height:16px;background:#444;"></div>
<div class="a" style="left:130px;top:151px;width:193px;height:16px;background:#3a3a3a;"></div>
<div class="t" style="left:77px;top:154px;font-size:11.3px;color:#e0e0e0;">Outliner</div>
<div class="t" style="left:76px;top:172px;font-size:11.3px;color:#c8c8c8;">Display</div>
<div class="t" style="left:128px;top:172px;font-size:11.3px;color:#c8c8c8;">Show</div>
<div class="t" style="left:172px;top:172px;font-size:11.3px;color:#c8c8c8;">Help</div>
<svg class="a" style="left:73px;top:194px" width="16" height="18"><path d="M1 4V1h4M11 1h4v4M15 13v4h-4M5 17H1v-4" fill="none" stroke="#666" stroke-width="2"/></svg>
<div class="a" style="left:96px;top:194px;width:227px;height:18px;background:#2b2b2b;border-radius:2px"></div>
<div class="t" style="left:99px;top:198px;font-size:11.3px;color:#8a8a8a;">Search...</div>
<svg class="a" style="left:308px;top:200px" width="10" height="6"><path d="M0 0h10L5 5z" fill="#cfcfcf"/></svg>
<div class="a" style="left:69px;top:214px;width:254px;height:683px;background:#373737;"></div>
<div class="a" style="left:66px;top:897px;width:260px;height:10px;background:#404040;"></div>
<div class="a" style="left:323px;top:148px;width:4px;height:759px;background:#393939;"></div>
<svg class="a" style="left:104px;top:220px" width="15" height="9"><rect x="0" y="1" width="9" height="7" fill="#a8a8a8"/><path d="M10 4.5L14 1v7z" fill="#a8a8a8"/></svg>
<div class="t" style="left:123px;top:219px;font-size:11.3px;color:#7c7c7c;">persp</div>
<svg class="a" style="left:104px;top:240px" width="15" height="9"><rect x="0" y="1" width="9" height="7" fill="#a8a8a8"/><path d="M10 4.5L14 1v7z" fill="#a8a8a8"/></svg>
<div class="t" style="left:123px;top:239px;font-size:11.3px;color:#7c7c7c;">top</div>
<svg class="a" style="left:104px;top:260px" width="15" height="9"><rect x="0" y="1" width="9" height="7" fill="#a8a8a8"/><path d="M10 4.5L14 1v7z" fill="#a8a8a8"/></svg>
<div class="t" style="left:123px;top:259px;font-size:11.3px;color:#7c7c7c;">front</div>
<svg class="a" style="left:104px;top:280px" width="15" height="9"><rect x="0" y="1" width="9" height="7" fill="#a8a8a8"/><path d="M10 4.5L14 1v7z" fill="#a8a8a8"/></svg>
<div class="t" style="left:123px;top:279px;font-size:11.3px;color:#7c7c7c;">side</div>
<div class="a" style="left:69px;top:294px;width:244px;height:20px;background:#5285a6;"></div>
<svg class="a" style="left:103px;top:298px" width="18" height="12"><path d="M9 0.5l4 3-4 3-4-3zM4.5 3l4 3-4 3-4-3zM13.5 3l4 3-4 3-4-3zM9 5.5l4 3-4 3-4-3z" fill="#eee" stroke="#333" stroke-width="0.8"/></svg>
<div class="t" style="left:123px;top:299px;font-size:11.3px;color:#ffffff;">pCube1</div>
<svg class="a" style="left:103px;top:316px" width="16" height="16"><circle cx="8" cy="8" r="7" fill="none" stroke="#cfcfcf" stroke-width="1.3"/><circle cx="6" cy="10" r="2.6" fill="#cfcfcf"/><path d="M8 5h4v7H9V8z" fill="#3cb8c8"/></svg>
<div class="t" style="left:123px;top:319px;font-size:11.3px;color:#d0d0d0;">defaultLightSet</div>
<svg class="a" style="left:103px;top:336px" width="16" height="16"><circle cx="8" cy="8" r="7" fill="none" stroke="#cfcfcf" stroke-width="1.3"/><circle cx="6" cy="10" r="2.6" fill="#cfcfcf"/><path d="M8 5h4v7H9V8z" fill="#3cb8c8"/></svg>
<div class="t" style="left:123px;top:339px;font-size:11.3px;color:#d0d0d0;">defaultObjectSet</div>
<div class="a" style="left:315px;top:214px;width:8px;height:683px;background:#333;"></div>
<svg class="a" style="left:314px;top:216px" width="10" height="6"><path d="M0 6h10L5 0z" fill="#aaa"/></svg>
<div class="a" style="left:315px;top:228px;width:7px;height:643px;background:#5a5a5a;border-radius:3px"></div>
<svg class="a" style="left:314px;top:876px" width="10" height="6"><path d="M0 0h10L5 6z" fill="#aaa"/></svg>
<svg class="a" style="left:72px;top:886px" width="6" height="10"><path d="M6 0v10L0 5z" fill="#aaa"/></svg>
<svg class="a" style="left:304px;top:886px" width="6" height="10"><path d="M0 0v10L6 5z" fill="#aaa"/></svg>
<div class="a" style="left:82px;top:887px;width:218px;height:10px;background:#5a5a5a;border-radius:5px"></div>
<svg class="a" style="left:154px;top:898px" width="86" height="2"><rect x="0" y="0" width="1" height="1" fill="#6a6a6a"/><rect x="3" y="0" width="1" height="1" fill="#6a6a6a"/><rect x="6" y="0" width="1" height="1" fill="#6a6a6a"/><rect x="9" y="0" width="1" height="1" fill="#6a6a6a"/><rect x="12" y="0" width="1" height="1" fill="#6a6a6a"/><rect x="15" y="0" width="1" height="1" fill="#6a6a6a"/><rect x="18" y="0" width="1" height="1" fill="#6a6a6a"/><rect x="21" y="0" width="1" height="1" fill="#6a6a6a"/><rect x="24" y="0" width="1" height="1" fill="#6a6a6a"/><rect x="27" y="0" width="1" height="1" fill="#6a6a6a"/><rect x="30" y="0" width="1" height="1" fill="#6a6a6a"/><rect x="33" y="0" width="1" height="1" fill="#6a6a6a"/><rect x="36" y="0" width="1" height="1" fill="#6a6a6a"/><rect x="39" y="0" width="1" height="1" fill="#6a6a6a"/><rect x="42" y="0" width="1" height="1" fill="#6a6a6a"/><rect x="45" y="0" width="1" height="1" fill="#6a6a6a"/><rect x="48" y="0" width="1" height="1" fill="#6a6a6a"/><rect x="51" y="0" width="1" height="1" fill="#6a6a6a"/><rect x="54" y="0" width="1" height="1" fill="#6a6a6a"/><rect x="57" y="0" width="1" height="1" fill="#6a6a6a"/><rect x="60" y="0" width="1" height="1" fill="#6a6a6a"/><rect x="63" y="0" width="1" height="1" fill="#6a6a6a"/><rect x="66" y="0" width="1" height="1" fill="#6a6a6a"/><rect x="69" y="0" width="1" height="1" fill="#6a6a6a"/><rect x="72" y="0" width="1" height="1" fill="#6a6a6a"/><rect x="75" y="0" width="1" height="1" fill="#6a6a6a"/><rect x="78" y="0" width="1" height="1" fill="#6a6a6a"/><rect x="81" y="0" width="1" height="1" fill="#6a6a6a"/><rect x="84" y="0" width="1" height="1" fill="#6a6a6a"/></svg>
<div class="a" style="left:326px;top:148px;width:118px;height:0px;background:#444;"></div>
<div class="a" style="left:330px;top:152px;width:1107px;height:752px;background:#8a8a8a;"></div>
<div class="a" style="left:331px;top:153px;width:1105px;height:39px;background:#444;"></div>
<div class="a" style="left:331px;top:192px;width:1105px;height:711px;background:#5d5d5d;"></div>
<div class="t" style="left:339px;top:156px;font-size:11.3px;color:#c8c8c8;">View</div>
<div class="t" style="left:379px;top:156px;font-size:11.3px;color:#c8c8c8;">Shading</div>
<div class="t" style="left:437px;top:156px;font-size:11.3px;color:#c8c8c8;">Lighting</div>
<div class="t" style="left:495px;top:156px;font-size:11.3px;color:#c8c8c8;">Show</div>
<div class="t" style="left:539px;top:156px;font-size:11.3px;color:#c8c8c8;">Renderer</div>
<div class="t" style="left:601px;top:156px;font-size:11.3px;color:#c8c8c8;">Panels</div>
<svg class="a" style="left:333px;top:172px" width="5" height="18"><rect x="2" y="0" width="1" height="18" fill="#6b6b6b"/><rect x="1" y="5" width="3" height="8" rx="1" fill="#7a7a7a"/></svg>
<div class="a" style="left:493px;top:171px;width:20px;height:20px;background:#5285a6;"></div>
<div class="a" style="left:664px;top:171px;width:20px;height:20px;background:#5285a6;"></div>
<div class="a" style="left:553px;top:172px;width:18px;height:18px;background:#333;border:1px solid #2a2a2a;border-radius:2px"></div>
<div class="a" style="left:855px;top:172px;width:18px;height:18px;background:#333;border:1px solid #2a2a2a;border-radius:2px"></div>
<svg class="a" style="left:340px;top:171px" width="560" height="20" viewBox="0 0 560 20">
<rect x="4" y="6" width="9" height="8" fill="#cfcfcf"/><path d="M14 10l4-4v9z" fill="#cfcfcf"/>
<rect x="26" y="5" width="8" height="8" fill="#aaa"/><path d="M35 9l4-4v9z" fill="#aaa"/><rect x="27" y="11" width="6" height="5" rx="1" fill="#3cb8c8"/><path d="M28 11V9a2 2 0 0 1 4 0v2" fill="none" stroke="#3cb8c8"/>
<rect x="49" y="3" width="8" height="7" fill="#aaa"/><path d="M58 6.5l4-4v9z" fill="#aaa"/><circle cx="50" cy="13" r="2.6" fill="none" stroke="#3cb8c8" stroke-width="2" stroke-dasharray="1.6 0.9"/><circle cx="50" cy="13" r="1" fill="#3cb8c8"/>
<path d="M68 4h6v12l-3-3-3 3z" fill="#cfcfcf"/>
<path d="M87 15V7l5-5v8z" fill="#3cb8c8"/><path d="M83 18l3-3h12l-3 3z" fill="none" stroke="#cfcfcf" stroke-width="1.2"/><path d="M89 16.5h6" stroke="#cfcfcf"/>
<path d="M105 10h7M109 5v7" stroke="#cfcfcf" stroke-width="1.5"/><path d="M104 10l2-2v4zM109 3l-2 2h4z" fill="#cfcfcf"/><circle cx="115" cy="12" r="3" fill="none" stroke="#3cb8c8" stroke-width="1.6"/><path d="M113 14l-3.5 3.5" stroke="#3cb8c8" stroke-width="1.8"/>
<path d="M126 15l9-9 2 2-9 9z" fill="#cfcfcf"/><circle cx="126" cy="16" r="1.6" fill="#3cb8c8"/><path d="M132 16c2 1.5 4 1 4-1" fill="none" stroke="#cfcfcf"/>
<rect x="157.5" y="3.5" width="11" height="11" fill="#2e2e2e" stroke="#e0e0e0"/>
<rect x="159" y="5" width="2.4" height="2.4" fill="#e0e0e0"/><rect x="162.3" y="5" width="2.4" height="2.4" fill="#e0e0e0"/><rect x="165.6" y="5" width="1.8" height="2.4" fill="#e0e0e0"/>
<rect x="159" y="8.3" width="2.4" height="2.4" fill="#e0e0e0"/><rect x="162.3" y="8.3" width="2.4" height="2.4" fill="#e0e0e0"/><rect x="165.6" y="8.3" width="1.8" height="2.4" fill="#e0e0e0"/>
<rect x="159" y="11.6" width="2.4" height="2" fill="#e0e0e0"/><rect x="162.3" y="11.6" width="2.4" height="2" fill="#e0e0e0"/><rect x="165.6" y="11.6" width="1.8" height="2" fill="#e0e0e0"/>
<rect x="175" y="4" width="16" height="12" fill="none" stroke="#cfcfcf"/><path d="M175 6h16M175 14h16" stroke="#cfcfcf" stroke-dasharray="1.5 1.5"/>
<rect x="196" y="3" width="14" height="14" fill="none" stroke="#cfcfcf"/><circle cx="203" cy="10" r="3" fill="#3cb8c8"/>
<circle cx="222" cy="10" r="4" fill="#444"/>
<rect x="236" y="3" width="14" height="14" fill="none" stroke="#cfcfcf"/><path d="M243 3v14M236 10h14" stroke="#3cb8c8" stroke-dasharray="2 1"/>
<rect x="256" y="3" width="14" height="14" fill="none" stroke="#cfcfcf"/><path d="M259 13l4-4 2 2 3-3v5z" fill="#3cb8c8"/>
<rect x="274" y="3" width="14" height="14" fill="none" stroke="#cfcfcf"/><path d="M277 6h8v2h-3v7h-2V8h-3z" fill="#3cb8c8"/>
<path d="M306 5l7-3 7 3v9l-7 4-7-4z" fill="none" stroke="#3cb8c8" stroke-width="1.4"/><path d="M306 5l7 4 7-4M313 9v9" stroke="#3cb8c8" stroke-width="1.2" fill="none"/>
<path d="M326 5l7-3 7 3v9l-7 4-7-4z" fill="#bbb"/><path d="M326 5l7 4 7-4z" fill="#ddd"/><path d="M333 9v9l7-4V5z" fill="#888"/>
<circle cx="353" cy="10" r="7" fill="#cfcfcf"/><path d="M353 3v14" stroke="#444" stroke-width="2"/><path d="M355 4h3v3h-3zM355 10h3v3h-3z" fill="#444"/>
<path d="M366 5l7-3 7 3v9l-7 4-7-4z" fill="none" stroke="#3cb8c8" stroke-width="1.4"/><path d="M369 8l4 2 4-2v4l-4 2-4-2z" fill="#3cb8c8"/>
<circle cx="394" cy="10" r="7" fill="#cfcfcf"/><path d="M389 6h3v3h-3zM395 6h3v3h-3zM392 9h3v3h-3zM389 12h3v3h-3zM395 12h3v3h-3z" fill="#444"/>
<circle cx="413" cy="9" r="4" fill="#cfcfcf"/><rect x="411" y="13" width="4" height="3" fill="#cfcfcf"/><path d="M405 9h2M419 9h2M413 2v2M407 4l1 1M419 4l-1 1" stroke="#cfcfcf"/>
<circle cx="436" cy="9" r="5" fill="#3cb8c8"/><path d="M426 16l6-4M428 17l5-3" stroke="#cfcfcf"/>
<ellipse cx="465" cy="8" rx="7" ry="5" fill="#cfcfcf"/><path d="M458 10l6 5M459 14l4 3" stroke="#3cb8c8" stroke-width="1.4"/><circle cx="465" cy="8" r="2" fill="#444"/>
<circle cx="481" cy="10" r="4.5" fill="#cfcfcf"/><path d="M478 5a6 6 0 0 0 0 10" fill="none" stroke="#cfcfcf" stroke-width="1.6"/><path d="M474 6a7 7 0 0 0 0 8" fill="none" stroke="#cfcfcf" stroke-width="1.2"/>
<path d="M504 4a7 7 0 1 1-5 2" fill="none" stroke="#cfcfcf" stroke-width="2" stroke-dasharray="3 1.5"/>
<rect x="516" y="3" width="10" height="12" fill="#444"/><rect x="519" y="5" width="10" height="12" fill="#555"/>
</svg>
<svg class="a" style="left:483px;top:172px" width="5" height="18"><rect x="2" y="0" width="1" height="18" fill="#6b6b6b"/><rect x="1" y="5" width="3" height="8" rx="1" fill="#7a7a7a"/></svg>
<svg class="a" style="left:634px;top:172px" width="5" height="18"><rect x="2" y="0" width="1" height="18" fill="#6b6b6b"/><rect x="1" y="5" width="3" height="8" rx="1" fill="#7a7a7a"/></svg>
<svg class="a" style="left:785px;top:172px" width="5" height="18"><rect x="2" y="0" width="1" height="18" fill="#6b6b6b"/><rect x="1" y="5" width="3" height="8" rx="1" fill="#7a7a7a"/></svg>
<svg class="a" style="left:876px;top:172px" width="5" height="18"><rect x="2" y="0" width="1" height="18" fill="#6b6b6b"/><rect x="1" y="5" width="3" height="8" rx="1" fill="#7a7a7a"/></svg>
<svg class="a" style="left:907px;top:172px" width="5" height="18"><rect x="2" y="0" width="1" height="18" fill="#6b6b6b"/><rect x="1" y="5" width="3" height="8" rx="1" fill="#7a7a7a"/></svg>
<svg class="a" style="left:978px;top:172px" width="5" height="18"><rect x="2" y="0" width="1" height="18" fill="#6b6b6b"/><rect x="1" y="5" width="3" height="8" rx="1" fill="#7a7a7a"/></svg>
<svg class="a" style="left:362px;top:172px" width="8" height="19" viewBox="0 0 8 19"><path d="M7.5 0H0v19h7.5v-4.5H5V4.5h2.5z" fill="#000"/><path d="M6.5 1H1v17h5.5v-2.5H4V3.5h2.5z" fill="#00ff00"/></svg>
<svg class="a" style="left:374px;top:172px" width="8" height="19" viewBox="0 0 8 19"><path d="M0.5 0H8v19H0.5v-4.5H3V4.5H0.5z" fill="#000"/><path d="M1.5 1H7v17H1.5v-2.5H4V3.5H1.5z" fill="#00ff00"/></svg>
<svg class="a" style="left:880px;top:171px" width="560" height="20" viewBox="880 0 560 20">
<path d="M888 4h8v8h-8z" fill="none" stroke="#3cb8c8" stroke-dasharray="2 1"/><path d="M893 8l7 6-3 .5 2 3-1.5 1-2-3-2.5 2z" fill="#cfcfcf"/>
<rect x="918" y="8" width="8" height="8" fill="#cfcfcf"/><rect x="921" y="4" width="8" height="8" fill="none" stroke="#cfcfcf" stroke-width="1.5"/>
<rect x="938" y="8" width="8" height="8" fill="#3cb8c8"/><rect x="941" y="4" width="8" height="8" fill="none" stroke="#cfcfcf" stroke-width="1.5"/><rect x="943" y="6" width="4" height="4" fill="#3cb8c8"/>
<rect x="960" y="3" width="14" height="14" fill="none" stroke="#cfcfcf"/><path d="M963 14l5-5M965 6h4v4" stroke="#3cb8c8" stroke-width="1.5"/><circle cx="967" cy="9" r="2" fill="#3cb8c8"/>
<circle cx="998" cy="10" r="7" fill="#cfcfcf"/><path d="M998 10l-5-5M998 10l6-3M998 10l1 7M998 10l-7 3" stroke="#444" stroke-width="1.4"/>
<path d="M1056 5h4v11h-4z" fill="#cfcfcf"/><path d="M1062 4a6 6 0 0 1 0 12" fill="none" stroke="#cfcfcf" stroke-width="1.5"/>
</svg>
<div class="a" style="left:1011px;top:174px;width:37px;height:14px;background:#2b2b2b;border-radius:2px"></div>
<div class="t" style="left:1015px;top:176px;font-size:11.3px;color:#d8d8d8;">0.00</div>
<div class="a" style="left:1073px;top:174px;width:37px;height:14px;background:#2b2b2b;border-radius:2px"></div>
<div class="t" style="left:1077px;top:176px;font-size:11.3px;color:#d8d8d8;">1.00</div>
<div class="a" style="left:1113px;top:171px;width:19px;height:20px;background:#5285a6;"></div>
<svg class="a" style="left:1114px;top:172px" width="18" height="18"><circle cx="9" cy="9" r="7.5" fill="#3cb8c8" stroke="#2a6a7a"/><text x="3.2" y="12" font-size="7" font-family="Liberation Sans" fill="#1d4f5a" font-weight="bold">ON</text></svg>
<div class="a" style="left:1135px;top:172px;width:137px;height:18px;background:#555;border-radius:2px"></div>
<div class="a" style="left:1252px;top:172px;width:1px;height:18px;background:#4a4a4a;"></div>
<div class="t" style="left:1139px;top:177px;font-size:11.3px;color:#d8d8d8;">sRGB gamma</div>
<svg class="a" style="left:1257px;top:178px" width="11" height="7"><path d="M0 0h11L5.5 6z" fill="#d0d0d0"/></svg>
<svg class="a" style="left:331px;top:192px" width="1105" height="711" viewBox="0 0 1105 711"><path d="M218.07 716.00L1110.00 334.23M475.29 716.00L-5.00 101.27M-5.00 317.66L1110.00 70.45M1110.00 400.85L213.65 -5.00M-5.00 214.26L1110.00 15.22M1110.00 250.43L364.08 -5.00M-5.00 144.42L995.59 -5.00M1110.00 159.09L514.24 -5.00M-5.00 94.08L767.28 -5.00M1110.00 97.74L664.12 -5.00M-5.00 56.08L538.34 -5.00M1110.00 53.69L813.73 -5.00M-5.00 26.38L308.76 -5.00M1110.00 20.53L963.08 -5.00M-5.00 2.52L78.54 -5.00" stroke="#3e3e3e" stroke-width="1" fill="none" opacity="0.8"/><path d="M-5.00 486.47L1110.00 160.62M1110.00 695.09L62.95 -5.00" stroke="#383838" stroke-width="1.6" fill="none"/><defs><linearGradient id="gTop" gradientUnits="userSpaceOnUse" x1="504.0" y1="248.0" x2="587.0" y2="108.0"><stop offset="0" stop-color="#a9a9a9" stop-opacity="1"/><stop offset="0.55" stop-color="#a6a6a6" stop-opacity="1"/><stop offset="0.85" stop-color="#9a9a9a" stop-opacity="1"/><stop offset="1" stop-color="#8a8a8a" stop-opacity="1"/></linearGradient><radialGradient id="gTopO" gradientUnits="userSpaceOnUse" cx="549" cy="188" r="250"><stop offset="0" stop-color="#000" stop-opacity="0"/><stop offset="0.6" stop-color="#000" stop-opacity="0"/><stop offset="1" stop-color="#000" stop-opacity="0.12"/></radialGradient><linearGradient id="gTR" gradientUnits="userSpaceOnUse" x1="509.0" y1="263.0" x2="784.0" y2="193.0"><stop offset="0" stop-color="#a9a9a9" stop-opacity="1"/><stop offset="0.75" stop-color="#a6a6a6" stop-opacity="1"/><stop offset="0.92" stop-color="#8a8a8a" stop-opacity="1"/><stop offset="1" stop-color="#5e5e5e" stop-opacity="1"/></linearGradient><linearGradient id="gTL" gradientUnits="userSpaceOnUse" x1="345.7" y1="154.2" x2="333.0" y2="174.6"><stop offset="0" stop-color="#a0a0a0" stop-opacity="1"/><stop offset="0.45" stop-color="#959595" stop-opacity="1"/><stop offset="0.7" stop-color="#9c9c9c" stop-opacity="1"/><stop offset="1" stop-color="#9e9e9e" stop-opacity="1"/></linearGradient><linearGradient id="gLb" gradientUnits="userSpaceOnUse" x1="369.0" y1="178.0" x2="429.0" y2="448.0"><stop offset="0" stop-color="#989898" stop-opacity="1"/><stop offset="1" stop-color="#858585" stop-opacity="1"/></linearGradient><linearGradient id="gLo" gradientUnits="userSpaceOnUse" x1="356.5" y1="428.7" x2="458.6" y2="332.9"><stop offset="0" stop-color="#000" stop-opacity="1"/><stop offset="0.16" stop-color="#000" stop-opacity="1"/><stop offset="0.25" stop-color="#000" stop-opacity="0.72"/><stop offset="0.36" stop-color="#000" stop-opacity="0.42"/><stop offset="0.5" stop-color="#000" stop-opacity="0.16"/><stop offset="0.72" stop-color="#000" stop-opacity="0"/></linearGradient><linearGradient id="gF" gradientUnits="userSpaceOnUse" x1="499.0" y1="273.0" x2="504.0" y2="578.0"><stop offset="0" stop-color="#a0a0a0" stop-opacity="1"/><stop offset="0.42" stop-color="#7c7c7c" stop-opacity="1"/><stop offset="0.67" stop-color="#555555" stop-opacity="1"/><stop offset="0.8" stop-color="#2a2a2a" stop-opacity="1"/><stop offset="0.9" stop-color="#000" stop-opacity="1"/><stop offset="1" stop-color="#000" stop-opacity="1"/></linearGradient><linearGradient id="gRb" gradientUnits="userSpaceOnUse" x1="514.0" y1="328.0" x2="779.0" y2="368.0"><stop offset="0" stop-color="#949494" stop-opacity="1"/><stop offset="0.5" stop-color="#7c7c7c" stop-opacity="1"/><stop offset="0.82" stop-color="#555555" stop-opacity="1"/><stop offset="1" stop-color="#303030" stop-opacity="1"/></linearGradient><linearGradient id="gRo" gradientUnits="userSpaceOnUse" x1="516.3" y1="575.6" x2="454.2" y2="428.2"><stop offset="0" stop-color="#000" stop-opacity="1"/><stop offset="0.05" stop-color="#000" stop-opacity="1"/><stop offset="0.13" stop-color="#000" stop-opacity="0.8"/><stop offset="0.22" stop-color="#000" stop-opacity="0.52"/><stop offset="0.53" stop-color="#000" stop-opacity="0.2"/><stop offset="1" stop-color="#000" stop-opacity="0"/></linearGradient></defs><polygon points="345.7,154.2 577.1,111.8 590.3,110.1 607.4,115.4 775.5,181.8 499.5,250.0" fill="url(#gTop)" /><polygon points="345.7,154.2 577.1,111.8 590.3,110.1 607.4,115.4 775.5,181.8 499.5,250.0" fill="url(#gTopO)" /><polygon points="345.7,154.2 499.5,250.0 481.7,273.4 331.4,173.6 336.1,165.4" fill="url(#gTL)" /><polygon points="499.5,250.0 775.5,181.8 787.1,195.4 787.1,204.9 510.3,275.4" fill="url(#gTR)" /><polygon points="499.5,250.0 510.3,275.4 481.7,273.4" fill="#a4a4a4" /><polygon points="331.4,173.6 481.7,273.4 491.2,572.2 356.5,428.7 355.0,417.0" fill="url(#gLb)" /><polygon points="331.4,173.6 481.7,273.4 491.2,572.2 356.5,428.7 355.0,417.0" fill="url(#gLo)" /><polygon points="481.7,273.4 510.3,275.4 516.3,575.6 507.5,579.4 491.2,572.2" fill="url(#gF)" /><polygon points="510.3,275.4 787.1,204.9 758.6,462.4 757.7,473.9 516.3,575.6" fill="url(#gRb)" /><polygon points="510.3,275.4 787.1,204.9 758.6,462.4 757.7,473.9 516.3,575.6" fill="url(#gRo)" /><defs><linearGradient id="gRe" gradientUnits="userSpaceOnUse" x1="669.0" y1="408.0" x2="764.0" y2="488.0"><stop offset="0" stop-color="#000" stop-opacity="0"/><stop offset="1" stop-color="#000" stop-opacity="0.45"/></linearGradient></defs><polygon points="510.3,275.4 787.1,204.9 758.6,462.4 757.7,473.9 516.3,575.6" fill="url(#gRe)" /><path d="M353.0,385.0L410.0,364.0M652.0,389.0L759.0,463.0" stroke="#383838" stroke-width="1.5" fill="none" opacity="0.9"/><path d="M345.7,154.2 L577.1,111.8 L590.3,110.1 L607.4,115.4 L775.5,181.8 L787.1,195.4 L787.1,204.9 L758.6,462.4 L757.7,473.9 L516.3,575.6 L507.5,579.4 L491.2,572.2 L356.5,428.7 L355.0,417.0 L331.4,173.6 L336.1,165.4 L345.7,154.2 Z" fill="none" stroke="#40f0b0" stroke-width="1" shape-rendering="crispEdges"/><path d="M345.7,154.2 L499.5,250.0 L775.5,181.8" fill="none" stroke="#40f0b0" stroke-width="1" shape-rendering="crispEdges"/><path d="M331.4,173.6 L481.7,273.4 L510.3,275.4 L787.1,204.9" fill="none" stroke="#40f0b0" stroke-width="1" shape-rendering="crispEdges"/><path d="M499.5,250.0 L481.7,273.4" fill="none" stroke="#40f0b0" stroke-width="1" shape-rendering="crispEdges"/><path d="M499.5,250.0 L510.3,275.4" fill="none" stroke="#40f0b0" stroke-width="1" shape-rendering="crispEdges"/><path d="M481.7,273.4 L491.2,572.2" fill="none" stroke="#40f0b0" stroke-width="1" shape-rendering="crispEdges"/><path d="M510.3,275.4 L516.3,575.6" fill="none" stroke="#40f0b0" stroke-width="1" shape-rendering="crispEdges"/><path d="M345.7,154.2L239.5,70.7M331.4,173.6L225.0,92.3M336.1,165.4L218.3,158.0M499.5,250.0L382.3,154.0M481.7,273.4L431.7,350.7M510.3,275.4L464.0,353.0M577.0,111.6L537.1,23.2M590.9,109.5L659.6,15.2M607.4,115.4L670.2,29.1M776.3,181.3L868.3,103.0M787.3,195.7L935.0,205.3M787.3,204.7L938.0,214.7M353.8,417.3L255.8,406.5M356.2,429.1L286.3,524.4M367.4,440.9L302.5,531.5M491.2,572.2L406.1,689.4M507.5,579.4L422.9,695.3M516.3,575.6L574.0,713.0M760.5,463.4L811.4,504.5M746.6,479.1L799.8,596.6M757.7,473.9L813.4,593.5" stroke="#f0f000" stroke-width="1" fill="none" shape-rendering="crispEdges"/></svg>
<svg class="a" style="left:350px;top:855px" width="30" height="30" viewBox="0 0 30 30">
<path d="M6 22V9" stroke="#1fd11f" stroke-width="1.3"/><path d="M6 22l12-5" stroke="#e02020" stroke-width="1.3"/><path d="M6 22l7 4" stroke="#2a2adf" stroke-width="1.3"/>
<text x="3" y="8" font-size="7" font-family="Liberation Sans" font-weight="bold" fill="#1fd11f">y</text>
<text x="15" y="14" font-size="7" font-family="Liberation Sans" font-weight="bold" fill="#e02020">x</text>
<text x="12" y="27" font-size="7" font-family="Liberation Sans" font-weight="bold" fill="#3a3aff">z</text></svg>
<div class="t" style="left:862px;top:886px;font-size:11px;color:#e6e6e6;font-weight:bold">persp</div>
<div class="a" style="left:1437px;top:148px;width:7px;height:759px;background:#3a3a3a;"></div>
<div class="a" style="left:1444px;top:148px;width:459px;height:759px;background:#444;"></div>
<div class="t" style="left:1453px;top:156px;font-size:11.3px;color:#c8c8c8;">List</div>
<div class="t" style="left:1485px;top:156px;font-size:11.3px;color:#c8c8c8;">Selected</div>
<div class="t" style="left:1543px;top:156px;font-size:11.3px;color:#c8c8c8;">Focus</div>
<div class="t" style="left:1588px;top:156px;font-size:11.3px;color:#c8c8c8;">Attributes</div>
<div class="t" style="left:1654px;top:156px;font-size:11.3px;color:#c8c8c8;">Show</div>
<div class="t" style="left:1698px;top:156px;font-size:11.3px;color:#c8c8c8;">Help</div>
<div class="a" style="left:1450px;top:187px;width:416px;height:17px;background:#333;"></div>
<div class="a" style="left:1451px;top:188px;width:61px;height:16px;background:#3b3b3b;"></div>
<div class="t" style="left:1462px;top:191px;font-size:11.3px;color:#a8a8a8;">pCube1</div>
<div class="a" style="left:1514px;top:187px;width:94px;height:17px;background:#444;"></div>
<div class="t" style="left:1526px;top:191px;font-size:11.3px;color:#ececec;">pCubeShape1</div>
<div class="a" style="left:1609px;top:188px;width:98px;height:16px;background:#3b3b3b;"></div>
<div class="t" style="left:1620px;top:191px;font-size:11.3px;color:#a8a8a8;">polySoftEdge1</div>
<div class="a" style="left:1709px;top:188px;width:136px;height:16px;background:#3b3b3b;"></div>
<div class="t" style="left:1720px;top:191px;font-size:11.3px;color:#a8a8a8;">polyNormalPerVertex1</div>
<div class="a" style="left:1847px;top:188px;width:18px;height:16px;background:#3b3b3b;"></div>
<div class="t" style="left:1858px;top:191px;font-size:11.3px;color:#a8a8a8;">p</div>
<svg class="a" style="left:1871px;top:189px" width="25" height="12"><path d="M6 0v12L0 6z" fill="#6a6a6a"/><path d="M19 0v12L25 6z" fill="#e0e0e0"/></svg>
<div class="t" style="left:1565px;top:241px;font-size:11.3px;color:#c8c8c8;">mesh:</div>
<div class="a" style="left:1601px;top:235px;width:154px;height:22px;background:#2b2b2b;border-radius:2px"></div>
<div class="t" style="left:1606px;top:241px;font-size:11.3px;color:#e4e4e4;">pCubeShape1</div>
<svg class="a" style="left:1767px;top:226px" width="18" height="38"><rect x="2.5" y="1.5" width="13" height="11" fill="none" stroke="#cfcfcf" stroke-width="1.3"/><path d="M0 4l5 3-5 3z" fill="#cfcfcf"/><rect x="1.5" y="24.5" width="13" height="11" fill="none" stroke="#cfcfcf" stroke-width="1.3"/><path d="M13 27l5 3-5 3z" fill="#cfcfcf"/></svg>
<div class="a" style="left:1796px;top:214px;width:70px;height:20px;background:#5b5b5b;"></div>
<div class="t" style="left:1816px;top:219px;font-size:11.3px;color:#f0f0f0;">Focus</div>
<div class="a" style="left:1796px;top:236px;width:70px;height:20px;background:#4b4b4b;"></div>
<div class="t" style="left:1811px;top:241px;font-size:11.3px;color:#8a8a8a;">Presets</div>
<div class="a" style="left:1796px;top:258px;width:35px;height:20px;background:#5b5b5b;"></div>
<div class="t" style="left:1799px;top:263px;font-size:11.3px;color:#f0f0f0;">Show</div>
<div class="a" style="left:1833px;top:258px;width:34px;height:20px;background:#5b5b5b;"></div>
<div class="t" style="left:1838px;top:263px;font-size:11.3px;color:#f0f0f0;">Hide</div>
<div class="a" style="left:1903px;top:148px;width:17px;height:759px;background:#3c3c3c;"></div>
<div class="a" style="left:1904px;top:152px;width:15px;height:153px;background:#393939;"></div>
<div class="t" style="left:1905px;top:161px;font-size:11px;color:#a8a8a8;transform:rotate(90deg) translate(0,-12px);transform-origin:0 0;letter-spacing:0.5px">Channel Box / Layer Editor</div>
<div class="a" style="left:1904px;top:309px;width:15px;height:100px;background:#393939;"></div>
<div class="t" style="left:1905px;top:321px;font-size:11px;color:#a8a8a8;transform:rotate(90deg) translate(0,-12px);transform-origin:0 0;letter-spacing:0.5px">Modeling Toolkit</div>
<div class="a" style="left:1904px;top:420px;width:15px;height:100px;background:#454545;"></div>
<div class="t" style="left:1905px;top:431px;font-size:11px;color:#e8e8e8;transform:rotate(90deg) translate(0,-12px);transform-origin:0 0;letter-spacing:0.5px">Attribute Editor</div>
<div class="a" style="left:1456px;top:290px;width:425px;height:470px;background:#444;"></div>
<div class="a" style="left:1456px;top:290px;width:1px;height:470px;background:#3f3f3f;"></div>
<div class="a" style="left:1457px;top:445px;width:423px;height:1px;background:#3c3c3c;"></div>
<div class="a" style="left:1457px;top:565px;width:423px;height:1px;background:#3c3c3c;"></div>
<div class="a" style="left:1457px;top:630px;width:423px;height:1px;background:#3c3c3c;"></div>
<div class="a" style="left:1884px;top:291px;width:10px;height:469px;background:#3a3a3a;"></div>
<svg class="a" style="left:1884px;top:294px" width="10" height="6"><path d="M0 6h10L5 0z" fill="#cfcfcf"/></svg>
<div class="a" style="left:1885px;top:342px;width:8px;height:287px;background:#5a5a5a;border-radius:3px"></div>
<svg class="a" style="left:1884px;top:748px" width="10" height="6"><path d="M0 0h10L5 6z" fill="#cfcfcf"/></svg>
<div class="a" style="left:1600px;top:287px;width:200px;height:8px;overflow:hidden"><div class="a" style="left:8px;top:-6px;width:13px;height:13px;background:#2b2b2b"></div><div class="t" style="left:26px;top:-5px;font-size:11.3px;color:#c8c8c8">Display Immediate</div></div>
<div class="a" style="left:1608px;top:301px;width:13px;height:13px;background:#2b2b2b;border-radius:1px"></div>
<div class="t" style="left:1626px;top:303px;font-size:11.3px;color:#c8c8c8;">Display Vertices</div>
<div class="t" style="right:320px;top:322px;font-size:12px;color:#7c7c7c">Vertex Size</div>
<div class="a" style="left:1608px;top:320px;width:67px;height:17px;background:#3b3b3b;border-radius:1px"></div>
<div class="t" style="left:1612px;top:323px;font-size:11.3px;color:#6e6e6e;">3.000</div>
<div class="a" style="left:1608px;top:342px;width:13px;height:13px;background:#2b2b2b;border-radius:1px"></div>
<svg class="a" style="left:1608px;top:342px" width="13" height="13"><path d="M2.5 6.5l3 3 5-7" fill="none" stroke="#8a8a8a" stroke-width="1.6"/></svg>
<div class="t" style="left:1626px;top:344px;font-size:11.3px;color:#7c7c7c;">Vertex Backface Culling</div>
<div class="t" style="right:320px;top:363px;font-size:12px;color:#c8c8c8">Backface Culling</div>
<div class="a" style="left:1609px;top:360px;width:67px;height:19px;background:#555;border-radius:2px"></div>
<div class="a" style="left:1656px;top:360px;width:1px;height:19px;background:#4a4a4a;"></div>
<div class="t" style="left:1613px;top:364px;font-size:11.3px;color:#d6d6d6;">off</div>
<svg class="a" style="left:1660px;top:366px" width="11" height="7"><path d="M0 0h11L5.5 6z" fill="#d0d0d0"/></svg>
<div class="t" style="right:320px;top:387px;font-size:12px;color:#c8c8c8">Display Edges</div>
<div class="a" style="left:1609px;top:384px;width:103px;height:19px;background:#555;border-radius:2px"></div>
<div class="a" style="left:1691px;top:384px;width:1px;height:19px;background:#4a4a4a;"></div>
<div class="t" style="left:1613px;top:388px;font-size:11.3px;color:#d6d6d6;">Standard</div>
<svg class="a" style="left:1695px;top:390px" width="11" height="7"><path d="M0 0h11L5.5 6z" fill="#d0d0d0"/></svg>
<div class="a" style="left:1608px;top:407px;width:13px;height:13px;background:#2b2b2b;border-radius:1px"></div>
<div class="t" style="left:1626px;top:409px;font-size:11.3px;color:#c8c8c8;">Display Borders</div>
<div class="t" style="right:320px;top:428px;font-size:12px;color:#7c7c7c">Border Width</div>
<div class="a" style="left:1608px;top:426px;width:67px;height:17px;background:#3b3b3b;border-radius:1px"></div>
<div class="t" style="left:1612px;top:429px;font-size:11.3px;color:#6e6e6e;">2.000</div>
<div class="a" style="left:1608px;top:450px;width:13px;height:13px;background:#2b2b2b;border-radius:1px"></div>
<div class="t" style="left:1626px;top:452px;font-size:11.3px;color:#c8c8c8;">Display Center</div>
<div class="a" style="left:1608px;top:469px;width:13px;height:13px;background:#2b2b2b;border-radius:1px"></div>
<div class="t" style="left:1626px;top:471px;font-size:11.3px;color:#c8c8c8;">Display Triangles</div>
<div class="a" style="left:1608px;top:488px;width:13px;height:13px;background:#2b2b2b;border-radius:1px"></div>
<div class="t" style="left:1626px;top:490px;font-size:11.3px;color:#c8c8c8;">Display UVs</div>
<div class="t" style="right:320px;top:509px;font-size:12px;color:#7c7c7c">Uv Size</div>
<div class="a" style="left:1608px;top:507px;width:67px;height:17px;background:#3b3b3b;border-radius:1px"></div>
<div class="t" style="left:1612px;top:510px;font-size:11.3px;color:#6e6e6e;">4.000</div>
<div class="a" style="left:1608px;top:529px;width:13px;height:13px;background:#2b2b2b;border-radius:1px"></div>
<div class="t" style="left:1626px;top:531px;font-size:11.3px;color:#c8c8c8;">Display Non Planar</div>
<div class="a" style="left:1608px;top:548px;width:13px;height:13px;background:#2b2b2b;border-radius:1px"></div>
<div class="t" style="left:1626px;top:550px;font-size:11.3px;color:#c8c8c8;">Display Invisible Faces</div>
<div class="a" style="left:1608px;top:569px;width:13px;height:13px;background:#2b2b2b;border-radius:1px"></div>
<div class="t" style="left:1626px;top:571px;font-size:11.3px;color:#c8c8c8;">Display Colors</div>
<div class="t" style="right:320px;top:591px;font-size:12px;color:#c8c8c8">Display Color Channel</div>
<div class="a" style="left:1609px;top:588px;width:131px;height:19px;background:#555;border-radius:2px"></div>
<div class="a" style="left:1720px;top:588px;width:1px;height:19px;background:#4a4a4a;"></div>
<div class="t" style="left:1613px;top:592px;font-size:11.3px;color:#d6d6d6;">Ambient+Diffuse</div>
<svg class="a" style="left:1724px;top:594px" width="11" height="7"><path d="M0 0h11L5.5 6z" fill="#d0d0d0"/></svg>
<div class="t" style="right:320px;top:614px;font-size:12px;color:#c8c8c8">Material Blend</div>
<div class="a" style="left:1609px;top:611px;width:103px;height:19px;background:#555;border-radius:2px"></div>
<div class="a" style="left:1692px;top:611px;width:1px;height:19px;background:#4a4a4a;"></div>
<div class="t" style="left:1613px;top:615px;font-size:11.3px;color:#d6d6d6;">overwrite</div>
<svg class="a" style="left:1696px;top:617px" width="11" height="7"><path d="M0 0h11L5.5 6z" fill="#d0d0d0"/></svg>
<div class="a" style="left:1608px;top:636px;width:13px;height:13px;background:#2b2b2b;border-radius:1px"></div>
<svg class="a" style="left:1608px;top:636px" width="13" height="13"><path d="M2.5 6.5l3 3 5-7" fill="none" stroke="#f0f0f0" stroke-width="1.6"/></svg>
<div class="t" style="left:1626px;top:638px;font-size:11.3px;color:#c8c8c8;">Display Normal</div>
<div class="a" style="left:1608px;top:655px;width:13px;height:13px;background:#2b2b2b;border-radius:1px"></div>
<div class="t" style="left:1626px;top:657px;font-size:11.3px;color:#c8c8c8;">Display Tangent</div>
<div class="t" style="right:320px;top:676px;font-size:12px;color:#c8c8c8">Normal Size</div>
<div class="a" style="left:1608px;top:674px;width:68px;height:17px;background:#2b2b2b;border-radius:1px"></div>
<div class="t" style="left:1612px;top:677px;font-size:11.3px;color:#dedede;">0.400</div>
<div class="t" style="right:320px;top:698px;font-size:12px;color:#c8c8c8">Normal Type</div>
<div class="a" style="left:1609px;top:695px;width:77px;height:19px;background:#555;border-radius:2px"></div>
<div class="a" style="left:1667px;top:695px;width:1px;height:19px;background:#4a4a4a;"></div>
<div class="t" style="left:1613px;top:699px;font-size:11.3px;color:#d6d6d6;">vtx</div>
<svg class="a" style="left:1671px;top:701px" width="11" height="7"><path d="M0 0h11L5.5 6z" fill="#d0d0d0"/></svg>
<div class="a" style="left:1455px;top:717px;width:426px;height:19px;background:#5a5a5a;border-radius:2px"></div>
<svg class="a" style="left:1464px;top:721px" width="8" height="11"><path d="M0 0l7 5.5L0 11z" fill="#e0e0e0"/></svg>
<div class="t" style="left:1488px;top:721px;font-size:11px;color:#d8d8d8;font-weight:bold">Mesh Controls</div>
<div class="a" style="left:1455px;top:740px;width:426px;height:19px;background:#5a5a5a;border-radius:2px"></div>
<svg class="a" style="left:1464px;top:744px" width="8" height="11"><path d="M0 0l7 5.5L0 11z" fill="#e0e0e0"/></svg>
<div class="t" style="left:1488px;top:744px;font-size:11px;color:#d8d8d8;font-weight:bold">Tangent Space</div>
<svg class="a" style="left:1598px;top:764px" width="150" height="2"><rect x="0" y="0" width="1" height="1" fill="#6a6a6a"/><rect x="3" y="0" width="1" height="1" fill="#6a6a6a"/><rect x="6" y="0" width="1" height="1" fill="#6a6a6a"/><rect x="9" y="0" width="1" height="1" fill="#6a6a6a"/><rect x="12" y="0" width="1" height="1" fill="#6a6a6a"/><rect x="15" y="0" width="1" height="1" fill="#6a6a6a"/><rect x="18" y="0" width="1" height="1" fill="#6a6a6a"/><rect x="21" y="0" width="1" height="1" fill="#6a6a6a"/><rect x="24" y="0" width="1" height="1" fill="#6a6a6a"/><rect x="27" y="0" width="1" height="1" fill="#6a6a6a"/><rect x="30" y="0" width="1" height="1" fill="#6a6a6a"/><rect x="33" y="0" width="1" height="1" fill="#6a6a6a"/><rect x="36" y="0" width="1" height="1" fill="#6a6a6a"/><rect x="39" y="0" width="1" height="1" fill="#6a6a6a"/><rect x="42" y="0" width="1" height="1" fill="#6a6a6a"/><rect x="45" y="0" width="1" height="1" fill="#6a6a6a"/><rect x="48" y="0" width="1" height="1" fill="#6a6a6a"/><rect x="51" y="0" width="1" height="1" fill="#6a6a6a"/><rect x="54" y="0" width="1" height="1" fill="#6a6a6a"/><rect x="57" y="0" width="1" height="1" fill="#6a6a6a"/><rect x="60" y="0" width="1" height="1" fill="#6a6a6a"/><rect x="63" y="0" width="1" height="1" fill="#6a6a6a"/><rect x="66" y="0" width="1" height="1" fill="#6a6a6a"/><rect x="69" y="0" width="1" height="1" fill="#6a6a6a"/><rect x="72" y="0" width="1" height="1" fill="#6a6a6a"/><rect x="75" y="0" width="1" height="1" fill="#6a6a6a"/><rect x="78" y="0" width="1" height="1" fill="#6a6a6a"/><rect x="81" y="0" width="1" height="1" fill="#6a6a6a"/><rect x="84" y="0" width="1" height="1" fill="#6a6a6a"/><rect x="87" y="0" width="1" height="1" fill="#6a6a6a"/><rect x="90" y="0" width="1" height="1" fill="#6a6a6a"/><rect x="93" y="0" width="1" height="1" fill="#6a6a6a"/><rect x="96" y="0" width="1" height="1" fill="#6a6a6a"/><rect x="99" y="0" width="1" height="1" fill="#6a6a6a"/><rect x="102" y="0" width="1" height="1" fill="#6a6a6a"/><rect x="105" y="0" width="1" height="1" fill="#6a6a6a"/><rect x="108" y="0" width="1" height="1" fill="#6a6a6a"/><rect x="111" y="0" width="1" height="1" fill="#6a6a6a"/><rect x="114" y="0" width="1" height="1" fill="#6a6a6a"/><rect x="117" y="0" width="1" height="1" fill="#6a6a6a"/><rect x="120" y="0" width="1" height="1" fill="#6a6a6a"/><rect x="123" y="0" width="1" height="1" fill="#6a6a6a"/><rect x="126" y="0" width="1" height="1" fill="#6a6a6a"/><rect x="129" y="0" width="1" height="1" fill="#6a6a6a"/><rect x="132" y="0" width="1" height="1" fill="#6a6a6a"/><rect x="135" y="0" width="1" height="1" fill="#6a6a6a"/><rect x="138" y="0" width="1" height="1" fill="#6a6a6a"/><rect x="141" y="0" width="1" height="1" fill="#6a6a6a"/><rect x="144" y="0" width="1" height="1" fill="#6a6a6a"/><rect x="147" y="0" width="1" height="1" fill="#6a6a6a"/></svg>
<div class="t" style="left:1458px;top:770px;font-size:10.8px;color:#d0d0d0;font-weight:bold">Notes:&nbsp; pCubeShape1</div>
<div class="a" style="left:1449px;top:781px;width:450px;height:90px;background:#2b2b2b;"></div>
<div class="a" style="left:1446px;top:876px;width:149px;height:26px;background:#5b5b5b;"></div>
<div class="t" style="left:1446px;width:149px;top:884px;text-align:center;font-size:12px;color:#e6e6e6">Select</div>
<div class="a" style="left:1597px;top:876px;width:153px;height:26px;background:#5b5b5b;"></div>
<div class="t" style="left:1597px;width:153px;top:884px;text-align:center;font-size:12px;color:#e6e6e6">Load Attributes</div>
<div class="a" style="left:1752px;top:876px;width:150px;height:26px;background:#5b5b5b;"></div>
<div class="t" style="left:1752px;width:150px;top:884px;text-align:center;font-size:12px;color:#e6e6e6">Copy Tab</div>
<div class="a" style="left:0px;top:907px;width:1920px;height:133px;background:#444;"></div>
<div class="a" style="left:0px;top:907px;width:1920px;height:2px;background:#3a3a3a;"></div>
<svg class="a" style="left:3px;top:913px" width="6" height="28"><rect x="0" y="0" width="1" height="1" fill="#6a6a6a"/><rect x="3" y="0" width="1" height="1" fill="#6a6a6a"/><rect x="0" y="3" width="1" height="1" fill="#6a6a6a"/><rect x="3" y="3" width="1" height="1" fill="#6a6a6a"/><rect x="0" y="6" width="1" height="1" fill="#6a6a6a"/><rect x="3" y="6" width="1" height="1" fill="#6a6a6a"/><rect x="0" y="9" width="1" height="1" fill="#6a6a6a"/><rect x="3" y="9" width="1" height="1" fill="#6a6a6a"/><rect x="0" y="12" width="1" height="1" fill="#6a6a6a"/><rect x="3" y="12" width="1" height="1" fill="#6a6a6a"/><rect x="0" y="15" width="1" height="1" fill="#6a6a6a"/><rect x="3" y="15" width="1" height="1" fill="#6a6a6a"/><rect x="0" y="18" width="1" height="1" fill="#6a6a6a"/><rect x="3" y="18" width="1" height="1" fill="#6a6a6a"/><rect x="0" y="21" width="1" height="1" fill="#6a6a6a"/><rect x="3" y="21" width="1" height="1" fill="#6a6a6a"/><rect x="0" y="24" width="1" height="1" fill="#6a6a6a"/><rect x="3" y="24" width="1" height="1" fill="#6a6a6a"/><rect x="0" y="27" width="1" height="1" fill="#6a6a6a"/><rect x="3" y="27" width="1" height="1" fill="#6a6a6a"/></svg>
<div class="a" style="left:13px;top:912px;width:1632px;height:29px;background:#2b2b2b;"></div>
<div class="a" style="left:22px;top:912px;width:11px;height:29px;background:#5a5a5a;"></div>
<div class="t" style="left:24px;top:928px;font-size:11.3px;color:#ececec;">1</div>
<svg class="a" style="left:13px;top:912px" width="1632" height="29"><rect x="61.5" y="14" width="2" height="14" fill="#9a9a9a"/><rect x="128.8" y="14" width="2" height="14" fill="#9a9a9a"/><rect x="196.2" y="14" width="2" height="14" fill="#9a9a9a"/><rect x="263.5" y="14" width="2" height="14" fill="#9a9a9a"/><rect x="330.8" y="14" width="2" height="14" fill="#9a9a9a"/><rect x="398.1" y="14" width="2" height="14" fill="#9a9a9a"/><rect x="465.4" y="14" width="2" height="14" fill="#9a9a9a"/><rect x="532.8" y="14" width="2" height="14" fill="#9a9a9a"/><rect x="600.1" y="14" width="2" height="14" fill="#9a9a9a"/><rect x="667.4" y="14" width="2" height="14" fill="#9a9a9a"/><rect x="734.8" y="14" width="2" height="14" fill="#9a9a9a"/><rect x="802.1" y="14" width="2" height="14" fill="#9a9a9a"/><rect x="869.4" y="14" width="2" height="14" fill="#9a9a9a"/><rect x="936.7" y="14" width="2" height="14" fill="#9a9a9a"/><rect x="1004.0" y="14" width="2" height="14" fill="#9a9a9a"/><rect x="1071.4" y="14" width="2" height="14" fill="#9a9a9a"/><rect x="1138.7" y="14" width="2" height="14" fill="#9a9a9a"/><rect x="1206.0" y="14" width="2" height="14" fill="#9a9a9a"/><rect x="1273.3" y="14" width="2" height="14" fill="#9a9a9a"/><rect x="1340.7" y="14" width="2" height="14" fill="#9a9a9a"/><rect x="1408.0" y="14" width="2" height="14" fill="#9a9a9a"/><rect x="1475.3" y="14" width="2" height="14" fill="#9a9a9a"/><rect x="1542.7" y="14" width="2" height="14" fill="#9a9a9a"/><rect x="1610.0" y="14" width="2" height="14" fill="#9a9a9a"/></svg>
<div class="t" style="left:77.5px;top:913px;font-size:10.5px;color:#8f8f8f;">5</div>
<div class="t" style="left:144.825px;top:913px;font-size:10.5px;color:#8f8f8f;">10</div>
<div class="t" style="left:212.15px;top:913px;font-size:10.5px;color:#8f8f8f;">15</div>
<div class="t" style="left:279.475px;top:913px;font-size:10.5px;color:#8f8f8f;">20</div>
<div class="t" style="left:346.8px;top:913px;font-size:10.5px;color:#8f8f8f;">25</div>
<div class="t" style="left:414.125px;top:913px;font-size:10.5px;color:#8f8f8f;">30</div>
<div class="t" style="left:481.45px;top:913px;font-size:10.5px;color:#8f8f8f;">35</div>
<div class="t" style="left:548.775px;top:913px;font-size:10.5px;color:#8f8f8f;">40</div>
<div class="t" style="left:616.1px;top:913px;font-size:10.5px;color:#8f8f8f;">45</div>
<div class="t" style="left:683.425px;top:913px;font-size:10.5px;color:#8f8f8f;">50</div>
<div class="t" style="left:750.75px;top:913px;font-size:10.5px;color:#8f8f8f;">55</div>
<div class="t" style="left:818.075px;top:913px;font-size:10.5px;color:#8f8f8f;">60</div>
<div class="t" style="left:885.4px;top:913px;font-size:10.5px;color:#8f8f8f;">65</div>
<div class="t" style="left:952.725px;top:913px;font-size:10.5px;color:#8f8f8f;">70</div>
<div class="t" style="left:1020.05px;top:913px;font-size:10.5px;color:#8f8f8f;">75</div>
<div class="t" style="left:1087.375px;top:913px;font-size:10.5px;color:#8f8f8f;">80</div>
<div class="t" style="left:1154.7px;top:913px;font-size:10.5px;color:#8f8f8f;">85</div>
<div class="t" style="left:1222.025px;top:913px;font-size:10.5px;color:#8f8f8f;">90</div>
<div class="t" style="left:1289.35px;top:913px;font-size:10.5px;color:#8f8f8f;">95</div>
<div class="t" style="left:1356.675px;top:913px;font-size:10.5px;color:#8f8f8f;">100</div>
<div class="t" style="left:1424.0px;top:913px;font-size:10.5px;color:#8f8f8f;">105</div>
<div class="t" style="left:1491.325px;top:913px;font-size:10.5px;color:#8f8f8f;">110</div>
<div class="t" style="left:1558.65px;top:913px;font-size:10.5px;color:#8f8f8f;">115</div>
<div class="t" style="left:1625.975px;top:913px;font-size:10.5px;color:#8f8f8f;">120</div>
<div class="a" style="left:1652px;top:919px;width:68px;height:18px;background:#2b2b2b;border-radius:2px"></div>
<div class="t" style="left:1659px;top:923px;font-size:11.3px;color:#e0e0e0;">1</div>
<svg class="a" style="left:1725px;top:918px" width="190" height="18" viewBox="1725 918 190 18">
<rect x="1730" y="921" width="2" height="12" fill="#c8c8c8"/><path d="M1733 927l6-6v12zM1739 927l6-6v12z" fill="#c8c8c8"/>
<rect x="1755" y="921" width="2" height="12" fill="#c8c8c8"/><path d="M1758 927l9-6v12z" fill="#c8c8c8"/>
<rect x="1777" y="920" width="3" height="14" fill="#e8863a"/><path d="M1781 927l9-6v12z" fill="#c8c8c8"/>
<path d="M1800 927l13-7v14z" fill="#c8c8c8"/>
<path d="M1837 927l-13-7v14z" fill="#c8c8c8"/>
<path d="M1847 921l9 6-9 6z" fill="#c8c8c8"/><rect x="1857" y="920" width="3" height="14" fill="#e8863a"/>
<path d="M1870 921l9 6-9 6z" fill="#c8c8c8"/><rect x="1880" y="921" width="2" height="12" fill="#c8c8c8"/>
<path d="M1891 921l6 6-6 6zM1897 921l6 6-6 6z" fill="#c8c8c8"/><rect x="1904" y="921" width="2" height="12" fill="#c8c8c8"/>
</svg>
<div class="a" style="left:0px;top:944px;width:1920px;height:3px;background:#3a3a3a;"></div>
<svg class="a" style="left:3px;top:950px" width="6" height="28"><rect x="0" y="0" width="1" height="1" fill="#6a6a6a"/><rect x="3" y="0" width="1" height="1" fill="#6a6a6a"/><rect x="0" y="3" width="1" height="1" fill="#6a6a6a"/><rect x="3" y="3" width="1" height="1" fill="#6a6a6a"/><rect x="0" y="6" width="1" height="1" fill="#6a6a6a"/><rect x="3" y="6" width="1" height="1" fill="#6a6a6a"/><rect x="0" y="9" width="1" height="1" fill="#6a6a6a"/><rect x="3" y="9" width="1" height="1" fill="#6a6a6a"/><rect x="0" y="12" width="1" height="1" fill="#6a6a6a"/><rect x="3" y="12" width="1" height="1" fill="#6a6a6a"/><rect x="0" y="15" width="1" height="1" fill="#6a6a6a"/><rect x="3" y="15" width="1" height="1" fill="#6a6a6a"/><rect x="0" y="18" width="1" height="1" fill="#6a6a6a"/><rect x="3" y="18" width="1" height="1" fill="#6a6a6a"/><rect x="0" y="21" width="1" height="1" fill="#6a6a6a"/><rect x="3" y="21" width="1" height="1" fill="#6a6a6a"/><rect x="0" y="24" width="1" height="1" fill="#6a6a6a"/><rect x="3" y="24" width="1" height="1" fill="#6a6a6a"/><rect x="0" y="27" width="1" height="1" fill="#6a6a6a"/><rect x="3" y="27" width="1" height="1" fill="#6a6a6a"/></svg>
<div class="a" style="left:14px;top:952px;width:68px;height:22px;background:#2b2b2b;border-radius:2px"></div>
<div class="t" style="left:21px;top:958px;font-size:11.3px;color:#e0e0e0;">1</div>
<div class="a" style="left:90px;top:952px;width:68px;height:22px;background:#2b2b2b;border-radius:2px"></div>
<div class="t" style="left:96px;top:958px;font-size:11.3px;color:#e0e0e0;">1</div>
<div class="a" style="left:165px;top:951px;width:1283px;height:25px;background:#3c3c3c;"></div>
<div class="a" style="left:172px;top:954px;width:772px;height:18px;background:#5d5d5d;border-radius:3px"></div>
<div class="a" style="left:176px;top:957px;width:13px;height:12px;background:#a0a0a0;border-radius:3px"></div>
<div class="t" style="left:192px;top:958px;font-size:11.3px;color:#e0e0e0;">1</div>
<div class="t" style="left:905px;top:958px;font-size:11.3px;color:#e0e0e0;">120</div>
<div class="a" style="left:927px;top:957px;width:13px;height:12px;background:#a0a0a0;border-radius:3px"></div>
<div class="a" style="left:1456px;top:952px;width:68px;height:22px;background:#2b2b2b;border-radius:2px"></div>
<div class="t" style="left:1465px;top:958px;font-size:11.3px;color:#e0e0e0;">120</div>
<div class="a" style="left:1531px;top:952px;width:68px;height:22px;background:#2b2b2b;border-radius:2px"></div>
<div class="t" style="left:1538px;top:958px;font-size:11.3px;color:#e0e0e0;">200</div>
<svg class="a" style="left:1605px;top:959px" width="11" height="7"><path d="M0.5 0.5h10L5.5 6z" fill="#5a5a5a" stroke="#9a9a9a"/></svg>
<svg class="a" style="left:1734px;top:959px" width="11" height="7"><path d="M0.5 0.5h10L5.5 6z" fill="#5a5a5a" stroke="#9a9a9a"/></svg>
<div class="a" style="left:1622px;top:952px;width:101px;height:23px;background:#3f3f3f;border:1px solid #383838"></div>
<div class="t" style="left:1628px;top:958px;font-size:11.3px;color:#c8c8c8;">No Anim Layer</div>
<div class="a" style="left:1751px;top:952px;width:101px;height:23px;background:#3f3f3f;border:1px solid #383838"></div>
<div class="t" style="left:1757px;top:958px;font-size:11.3px;color:#c8c8c8;">No Character Set</div>
<svg class="a" style="left:1860px;top:953px" width="52" height="20" viewBox="0 0 52 20">
<path d="M3 9a7 7 0 0 1 13-3M16 11a7 7 0 0 1-13 3" fill="none" stroke="#c8c8c8" stroke-width="1.5"/><path d="M17 3v5h-5z" fill="#c8c8c8"/><rect x="9" y="5" width="2" height="10" fill="#e8863a"/><path d="M6 10h8" stroke="#e8863a" stroke-width="1.5"/>
<circle cx="35" cy="6" r="3.5" fill="none" stroke="#c8c8c8" stroke-width="1.6"/>
<circle cx="45" cy="6" r="2" fill="#e8863a"/><path d="M43 8l-3 5 4 2-1 4M42 12l-4 1M44 10l4 3" fill="none" stroke="#e8863a" stroke-width="2"/>
</svg>
<div class="a" style="left:0px;top:980px;width:1920px;height:2px;background:#383838;"></div>
<svg class="a" style="left:3px;top:988px" width="6" height="22"><rect x="0" y="0" width="1" height="1" fill="#6a6a6a"/><rect x="3" y="0" width="1" height="1" fill="#6a6a6a"/><rect x="0" y="3" width="1" height="1" fill="#6a6a6a"/><rect x="3" y="3" width="1" height="1" fill="#6a6a6a"/><rect x="0" y="6" width="1" height="1" fill="#6a6a6a"/><rect x="3" y="6" width="1" height="1" fill="#6a6a6a"/><rect x="0" y="9" width="1" height="1" fill="#6a6a6a"/><rect x="3" y="9" width="1" height="1" fill="#6a6a6a"/><rect x="0" y="12" width="1" height="1" fill="#6a6a6a"/><rect x="3" y="12" width="1" height="1" fill="#6a6a6a"/><rect x="0" y="15" width="1" height="1" fill="#6a6a6a"/><rect x="3" y="15" width="1" height="1" fill="#6a6a6a"/><rect x="0" y="18" width="1" height="1" fill="#6a6a6a"/><rect x="3" y="18" width="1" height="1" fill="#6a6a6a"/><rect x="0" y="21" width="1" height="1" fill="#6a6a6a"/><rect x="3" y="21" width="1" height="1" fill="#6a6a6a"/></svg>
<div class="t" style="left:24px;top:992px;font-size:11.3px;color:#e6e6e6;">MEL</div>
<div class="a" style="left:59px;top:987px;width:646px;height:23px;background:#2b2b2b;border-radius:2px"></div>
<svg class="a" style="left:707px;top:991px" width="2" height="14"><rect x="0" y="0" width="1" height="1" fill="#777"/><rect x="0" y="3" width="1" height="1" fill="#777"/><rect x="0" y="6" width="1" height="1" fill="#777"/><rect x="0" y="9" width="1" height="1" fill="#777"/><rect x="0" y="12" width="1" height="1" fill="#777"/></svg>
<div class="a" style="left:712px;top:987px;width:1174px;height:23px;background:#2b2b2b;border-radius:2px"></div>
<svg class="a" style="left:1892px;top:988px" width="20" height="20" viewBox="0 0 20 20">
<rect x="0.5" y="0.5" width="18" height="18" fill="#cfcfcf"/><rect x="1" y="3" width="17" height="1" fill="#444"/><rect x="2" y="1" width="1" height="1" fill="#444"/><rect x="4" y="1" width="1" height="1" fill="#444"/><rect x="6" y="1" width="1" height="1" fill="#444"/>
<text x="3" y="15" font-size="9" font-family="Liberation Mono" font-weight="bold" fill="#444">{;}</text></svg>
<div class="a" style="left:0px;top:1014px;width:1920px;height:2px;background:#383838;"></div>
<svg class="a" style="left:3px;top:1018px" width="6" height="20"><rect x="0" y="0" width="1" height="1" fill="#6a6a6a"/><rect x="3" y="0" width="1" height="1" fill="#6a6a6a"/><rect x="0" y="3" width="1" height="1" fill="#6a6a6a"/><rect x="3" y="3" width="1" height="1" fill="#6a6a6a"/><rect x="0" y="6" width="1" height="1" fill="#6a6a6a"/><rect x="3" y="6" width="1" height="1" fill="#6a6a6a"/><rect x="0" y="9" width="1" height="1" fill="#6a6a6a"/><rect x="3" y="9" width="1" height="1" fill="#6a6a6a"/><rect x="0" y="12" width="1" height="1" fill="#6a6a6a"/><rect x="3" y="12" width="1" height="1" fill="#6a6a6a"/><rect x="0" y="15" width="1" height="1" fill="#6a6a6a"/><rect x="3" y="15" width="1" height="1" fill="#6a6a6a"/><rect x="0" y="18" width="1" height="1" fill="#6a6a6a"/><rect x="3" y="18" width="1" height="1" fill="#6a6a6a"/></svg>
<div class="t" style="left:24px;top:1023px;font-size:9.9px;color:#c8c8c8;">Show Manipulator Tool: Select an object.</div>
<div class="a" style="left:0px;top:1040px;width:1920px;height:40px;background:#041414;"></div>
<div class="a" style="left:0px;top:1040px;width:48px;height:40px;background:#001010;"></div>
<svg class="a" style="left:16px;top:1052px" width="17" height="17"><path d="M0 2.3l7-1v7H0zM8 1.2l9-1.2v8.3H8zM0 9h7v7.2l-7-1zM8 9h9v8l-9-1.2z" fill="#fff"/></svg>
<div class="a" style="left:48px;top:1040px;width:344px;height:40px;background:#333;"></div>
<svg class="a" style="left:56px;top:1049px" width="24" height="23"><circle cx="12" cy="11.5" r="9.5" fill="none" stroke="#e8e8e8" stroke-width="2.6"/></svg>
<div class="t" style="left:84px;top:1053px;font-size:14.6px;color:#a8a8a8;">Ask me anything</div>
<svg class="a" style="left:365px;top:1051px" width="13" height="19"><rect x="3.5" y="0.5" width="6" height="11" rx="3" fill="none" stroke="#9a9a9a"/><path d="M1 8a5.5 5.5 0 0 0 11 0M6.5 14v4M3 18.5h7" fill="none" stroke="#9a9a9a"/></svg>
<svg class="a" style="left:405px;top:1053px" width="22" height="15"><rect x="5" y="1" width="12" height="13" fill="none" stroke="#fff" stroke-width="1.4"/><path d="M3 3H1v9h2M19 3h2v9h-2" fill="none" stroke="#fff" stroke-width="1.4"/></svg>
<svg class="a" style="left:456px;top:1049px" width="23" height="22"><path d="M2 13C2 5 8 1 13 1c6 0 9 4 9 9H8c0 5 5 7 8 7 3 0 5-1 6-2v5c-2 1-4 2-8 2-7 0-12-4-12-9zM8 8h8c0-3-2-4-4-4s-4 1-4 4z" fill="#1a8ee6"/></svg>
<svg class="a" style="left:505px;top:1051px" width="22" height="18"><path d="M0 2h8l2 2h11v14H0z" fill="#e8c052"/><path d="M0 6h21v12H0z" fill="#f5d36b"/><rect x="6" y="10" width="10" height="8" fill="#2b8fd6"/><rect x="8" y="13" width="6" height="5" fill="#f5d36b"/></svg>
<svg class="a" style="left:551px;top:1049px" width="24" height="23" viewBox="0 0 24 23"><defs><radialGradient id="ff" cx="0.6" cy="0.3" r="0.8"><stop offset="0" stop-color="#ffd43b"/><stop offset="0.5" stop-color="#ff7b1c"/><stop offset="1" stop-color="#d63a1a"/></radialGradient></defs><circle cx="12" cy="11.5" r="11" fill="url(#ff)"/><circle cx="13" cy="10" r="6.5" fill="#3a5db8"/><path d="M2 9c2-6 8-8 12-7-3 1-5 3-5 6 2-1 5 0 6 2-4 0-6 3-3 6 3 2 8 0 10-3-1 7-8 10-13 8C4 20 1 15 2 9z" fill="#f57c20"/></svg>
<div class="t" style="left:579px;top:1054px;font-size:11.6px;color:#eaeaea;">Maya 2017 | Стран...</div>
<div class="a" style="left:545px;top:1078px;width:152px;height:2px;background:#76b9ed;"></div>
<svg class="a" style="left:714px;top:1048px" width="24" height="23"><rect x="0" y="0" width="24" height="23" fill="#e6e6e6"/><path d="M5 18c2-4 5-6 7-5-2-3 1-6 4-6l2-3 1 1-2 3c1 2 0 4-2 5l3 5h-2l-2-4c-2 0-5 1-7 4z" fill="#1a1a1a"/><circle cx="15" cy="4" r="1.6" fill="#1a1a1a"/></svg>
<svg class="a" style="left:760px;top:1048px" width="25" height="23"><rect x="0" y="0" width="25" height="23" fill="#dfeeee"/><path d="M3 18V3h4l5.5 8L18 3h4v15h-4V9.5l-5 7h-1l-5-7V18z" fill="#22a4aa"/><rect x="9" y="19" width="7" height="2" fill="#5ab0b4"/></svg>
<div class="t" style="left:789px;top:1054px;font-size:12.5px;color:#eaeaea;">Output Window</div>
<div class="a" style="left:755px;top:1078px;width:152px;height:2px;background:#76b9ed;"></div>
<div class="a" style="left:910px;top:1040px;width:161px;height:40px;background:#263434;"></div>
<svg class="a" style="left:920px;top:1048px" width="25" height="23"><rect x="0" y="0" width="25" height="23" fill="#dfeeee"/><path d="M3 18V3h4l5.5 8L18 3h4v15h-4V9.5l-5 7h-1l-5-7V18z" fill="#22a4aa"/><rect x="9" y="19" width="7" height="2" fill="#5ab0b4"/></svg>
<div class="t" style="left:949px;top:1054px;font-size:12.3px;color:#eaeaea;">Autodesk Maya 201...</div>
<div class="a" style="left:910px;top:1078px;width:161px;height:2px;background:#76b9ed;"></div>
<svg class="a" style="left:1084px;top:1048px" width="24" height="24"><rect x="0" y="0" width="24" height="24" fill="#e5f2f2"/><text x="5" y="18" font-size="18" font-weight="bold" font-family="Liberation Sans" fill="#4cb8b8">3</text><text x="14" y="22" font-size="4" font-family="Liberation Sans" fill="#3a9a9a">MAX</text></svg>
<svg class="a" style="left:1134px;top:1049px" width="22" height="22"><rect x="1" y="1" width="20" height="20" fill="#061e2e" stroke="#31a8ff" stroke-width="1.6"/><text x="3.5" y="15.5" font-size="11" font-family="Liberation Sans" fill="#31a8ff">Ps</text></svg>
<svg class="a" style="left:1185px;top:1048px" width="19" height="24"><rect x="0" y="0" width="19" height="24" fill="#f0f0f0"/><rect x="2" y="2" width="15" height="4" fill="#041414"/><rect x="2" y="8" width="3" height="3" fill="#041414"/><rect x="6" y="8" width="3" height="3" fill="#041414"/><rect x="10" y="8" width="3" height="3" fill="#041414"/><rect x="14" y="8" width="3" height="3" fill="#041414"/><rect x="2" y="12" width="3" height="3" fill="#041414"/><rect x="6" y="12" width="3" height="3" fill="#041414"/><rect x="10" y="12" width="3" height="3" fill="#041414"/><rect x="14" y="12" width="3" height="3" fill="#041414"/><rect x="2" y="16" width="3" height="3" fill="#041414"/><rect x="6" y="16" width="3" height="3" fill="#041414"/><rect x="10" y="16" width="3" height="3" fill="#041414"/><rect x="14" y="16" width="3" height="3" fill="#041414"/><rect x="2" y="20" width="3" height="3" fill="#041414"/><rect x="6" y="20" width="3" height="3" fill="#041414"/><rect x="10" y="20" width="3" height="3" fill="#041414"/><rect x="14" y="20" width="3" height="3" fill="#041414"/></svg>
<svg class="a" style="left:1229px;top:1048px" width="24" height="24"><circle cx="12" cy="12" r="12" fill="#76b83f"/><path d="M6 6h4v7c0 2 1 3 2 3s2-1 2-3V6h4v7c0 5-3 7-6 7s-6-2-6-7z" fill="#fff"/></svg>
<div class="t" style="left:1257px;top:1054px;font-size:12.2px;color:#eaeaea;">µTorrent 3.4.9&nbsp; (buil...</div>
<div class="a" style="left:1223px;top:1078px;width:152px;height:2px;background:#76b9ed;"></div>
<svg class="a" style="left:1668px;top:1055px" width="14" height="8"><path d="M1 7l6-6 6 6" fill="none" stroke="#fff" stroke-width="1.3"/></svg>
<svg class="a" style="left:1690px;top:1053px" width="18" height="15"><rect x="4.5" y="0.5" width="13" height="9" fill="none" stroke="#fff"/><rect x="0.5" y="1.5" width="3" height="2" fill="none" stroke="#fff"/><path d="M1 4v6M11 10v3M7 13.5h8" stroke="#fff"/></svg>
<svg class="a" style="left:1714px;top:1051px" width="18" height="18"><path d="M1 6h3l5-4v14l-5-4H1z" fill="none" stroke="#fff"/><path d="M11 6a3 3 0 0 1 0 6M13 4a6 6 0 0 1 0 10" fill="none" stroke="#fff"/><path d="M15 2a9 9 0 0 1 0 14" fill="none" stroke="#888"/></svg>
<svg class="a" style="left:1742px;top:1051px" width="18" height="18"><path d="M4 15l9-13 2 1-9 13zM3 11c-2 2-2 5 1 5 2 0 3-2 6-2" fill="none" stroke="#fff" stroke-width="1.2"/></svg>
<div class="t" style="left:1774px;top:1054px;font-size:13px;color:#eaeaea;">РУС</div>
<div class="t" style="left:1820px;top:1045px;font-size:13px;color:#eaeaea;">21:19</div>
<div class="t" style="left:1812px;top:1063px;font-size:13px;color:#eaeaea;">2/5/2017</div>
<svg class="a" style="left:1878px;top:1050px" width="25" height="25"><path d="M1 1h16v12H9l-4 4v-4H1z" fill="#fff"/><path d="M4 4h10M4 7h10M4 10h7" stroke="#041414"/><circle cx="16" cy="17" r="6.5" fill="#2a2a2a" stroke="#888"/><text x="13.5" y="21" font-size="9" font-weight="bold" font-family="Liberation Sans" fill="#fff">1</text></svg>
<div class="a" style="left:1915px;top:1040px;width:1px;height:40px;background:#555;"></div>
</body></html>
